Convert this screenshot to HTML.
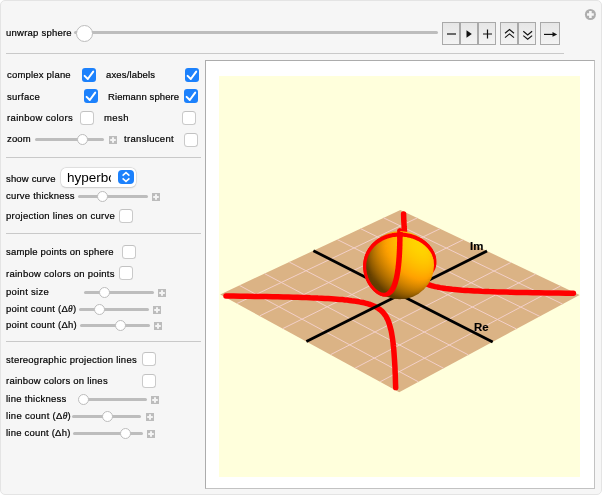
<!DOCTYPE html>
<html><head><meta charset="utf-8"><style>
html,body{margin:0;padding:0;width:602px;height:496px;overflow:hidden;background:#fff;}
body{position:relative;font-family:"Liberation Sans",sans-serif;}
#panel{position:absolute;left:0;top:0;width:600px;height:493px;background:#f6f6f6;border:1px solid #e4e4e4;border-radius:5px;}
.t{position:absolute;font-size:9.5px;will-change:transform;line-height:normal;white-space:nowrap;color:#000;-webkit-text-stroke:0.2px #000;}
.cb{position:absolute;width:12px;height:12px;background:#fff;border:1px solid #cacaca;border-top-color:#c2c2c2;border-radius:3.5px;}
.cbc{position:absolute;width:14px;height:14px;background:#1c81fc;border-radius:3px;}
.cbc svg{position:absolute;left:0;top:0;}
.tr{position:absolute;height:3px;background:#bdbdbd;border-radius:1.5px;}
.kn{position:absolute;width:9px;height:9px;background:#fff;border:1px solid #bcbcbc;border-radius:50%;}
.pl{position:absolute;width:8px;height:8px;background:#bcbcbc;}
.pl svg{position:absolute;left:0;top:0;}
.sep{position:absolute;height:1px;background:#c9c9c9;}
.btn{position:absolute;top:22px;height:21px;background:linear-gradient(#e6e6e6,#f3f3f3);border:1px solid #a9a9a9;}
#frame{position:absolute;left:205px;top:60px;width:388px;height:427px;background:#fff;border:1px solid;border-color:#acacac #c2c2c2 #c2c2c2 #acacac;}
</style></head><body>
<div id="panel"></div>
<div class="sep" style="left:6px;top:53px;width:558px"></div>
<div class="sep" style="left:6px;top:157px;width:195px"></div>
<div class="sep" style="left:6px;top:233px;width:195px"></div>
<div class="sep" style="left:6px;top:341px;width:195px"></div>
<div class="tr" style="left:74px;top:31px;width:364px"></div>
<div class="kn" style="left:76px;top:25px;width:15px;height:15px;"></div>
<div class="btn" style="left:442px;width:16px"></div>
<div class="btn" style="left:460px;width:16px"></div>
<div class="btn" style="left:478px;width:16px"></div>
<div class="btn" style="left:500px;width:16px"></div>
<div class="btn" style="left:518px;width:16px"></div>
<div class="btn" style="left:540px;width:18px"></div>
<svg style="position:absolute;left:0;top:0" width="602" height="496">
<path d="M447,34H456" stroke="#111" stroke-width="1.2"/>
<path d="M466.5,30.3L471.8,34L466.5,37.7Z" fill="#111"/>
<path d="M483,34H492M487.5,29.5V38.5" stroke="#111" stroke-width="1.2"/>
<path d="M505,33.3L509.5,29.6L514,33.3M505,37.6L509.5,33.9L514,37.6" stroke="#111" stroke-width="1.15" fill="none"/>
<path d="M523.3,31.3L527.7,35L532.1,31.3M523.3,35.6L527.7,39.3L532.1,35.6" stroke="#111" stroke-width="1.15" fill="none"/>
<path d="M544,34.4H554" stroke="#111" stroke-width="1.15"/><path d="M552.5,32L557.2,34.4L552.5,36.8Z" fill="#111"/>
<circle cx="590.4" cy="14.5" r="5.5" fill="#adadad"/>
<path d="M587,14.5H593.8M590.4,11.1V17.9" stroke="#f6f6f6" stroke-width="2.6"/>
</svg>
<div class="t" style="left:6.1px;top:27.40px;letter-spacing:0.233px">unwrap sphere</div>
<div class="t" style="left:6.9px;top:69.40px;letter-spacing:0.2px">complex plane</div>
<div class="t" style="left:105.9px;top:69.40px;letter-spacing:0.15px">axes/labels</div>
<div class="t" style="left:6.9px;top:91.40px;letter-spacing:0.267px">surface</div>
<div class="t" style="left:107.5px;top:91.40px;letter-spacing:0.108px">Riemann sphere</div>
<div class="t" style="left:6.9px;top:112.40px;letter-spacing:0.346px">rainbow colors</div>
<div class="t" style="left:103.5px;top:112.40px;letter-spacing:0.4px">mesh</div>
<div class="t" style="left:6.9px;top:133.40px;letter-spacing:0.133px">zoom</div>
<div class="t" style="left:124.0px;top:133.40px;letter-spacing:0.32px">translucent</div>
<div class="t" style="left:6.0px;top:173.40px;letter-spacing:0.167px">show curve</div>
<div class="t" style="left:6.0px;top:190.40px;letter-spacing:0.214px">curve thickness</div>
<div class="t" style="left:5.5px;top:210.40px;letter-spacing:0.267px">projection lines on curve</div>
<div class="t" style="left:6.0px;top:246.40px;letter-spacing:0.182px">sample points on sphere</div>
<div class="t" style="left:5.5px;top:268.40px;letter-spacing:0.261px">rainbow colors on points</div>
<div class="t" style="left:5.9px;top:286.40px;letter-spacing:0.3px">point size</div>
<div class="t" style="left:5.9px;top:303.20px;letter-spacing:0.247px">point count (&Delta;<i style="font-family:'Liberation Serif'">&theta;</i>)</div>
<div class="t" style="left:5.9px;top:319.20px;letter-spacing:0.24px">point count (&Delta;h)</div>
<div class="t" style="left:6.0px;top:353.90px;letter-spacing:0.245px">stereographic projection lines</div>
<div class="t" style="left:5.5px;top:375.20px;letter-spacing:0.227px">rainbow colors on lines</div>
<div class="t" style="left:5.5px;top:393.00px;letter-spacing:0.246px">line thickness</div>
<div class="t" style="left:5.5px;top:410.40px;letter-spacing:0.293px">line count (&Delta;<i style="font-family:'Liberation Serif'">&theta;</i>)</div>
<div class="t" style="left:5.5px;top:427.20px;letter-spacing:0.221px">line count (&Delta;h)</div>
<div class="cbc" style="left:82px;top:68px"><svg width="14" height="14" viewBox="0 0 14 14"><path d="M2.6,7.9 L5.8,11 L11.2,3.6" stroke="#fff" stroke-width="2" fill="none" stroke-linecap="round" stroke-linejoin="round"/></svg></div>
<div class="cbc" style="left:185px;top:68px"><svg width="14" height="14" viewBox="0 0 14 14"><path d="M2.6,7.9 L5.8,11 L11.2,3.6" stroke="#fff" stroke-width="2" fill="none" stroke-linecap="round" stroke-linejoin="round"/></svg></div>
<div class="cbc" style="left:84px;top:89px"><svg width="14" height="14" viewBox="0 0 14 14"><path d="M2.6,7.9 L5.8,11 L11.2,3.6" stroke="#fff" stroke-width="2" fill="none" stroke-linecap="round" stroke-linejoin="round"/></svg></div>
<div class="cbc" style="left:184px;top:89px"><svg width="14" height="14" viewBox="0 0 14 14"><path d="M2.6,7.9 L5.8,11 L11.2,3.6" stroke="#fff" stroke-width="2" fill="none" stroke-linecap="round" stroke-linejoin="round"/></svg></div>
<div class="cb" style="left:79.7px;top:111px"></div>
<div class="cb" style="left:182px;top:111px"></div>
<div class="cb" style="left:184px;top:133px"></div>
<div class="cb" style="left:119px;top:209px"></div>
<div class="cb" style="left:122px;top:245px"></div>
<div class="cb" style="left:119px;top:266.2px"></div>
<div class="cb" style="left:142px;top:352.3px"></div>
<div class="cb" style="left:142px;top:374px"></div>
<div class="tr" style="left:35.4px;top:137.80px;width:69.00px"></div><div class="kn" style="left:76.90px;top:133.80px"></div><div class="pl" style="left:109px;top:136.20px"><svg width="8" height="8"><path d="M1.2,4H6.8M4,1.2V6.8" stroke="#f4f4f4" stroke-width="2"/></svg></div>
<div class="tr" style="left:78px;top:195.00px;width:69.60px"></div><div class="kn" style="left:96.80px;top:191.00px"></div><div class="pl" style="left:152px;top:193.40px"><svg width="8" height="8"><path d="M1.2,4H6.8M4,1.2V6.8" stroke="#f4f4f4" stroke-width="2"/></svg></div>
<div class="tr" style="left:84.2px;top:290.70px;width:69.80px"></div><div class="kn" style="left:99.00px;top:286.70px"></div><div class="pl" style="left:158px;top:289.10px"><svg width="8" height="8"><path d="M1.2,4H6.8M4,1.2V6.8" stroke="#f4f4f4" stroke-width="2"/></svg></div>
<div class="tr" style="left:79px;top:307.80px;width:69.90px"></div><div class="kn" style="left:94.00px;top:303.80px"></div><div class="pl" style="left:153px;top:306.20px"><svg width="8" height="8"><path d="M1.2,4H6.8M4,1.2V6.8" stroke="#f4f4f4" stroke-width="2"/></svg></div>
<div class="tr" style="left:80px;top:323.80px;width:69.70px"></div><div class="kn" style="left:115.10px;top:319.80px"></div><div class="pl" style="left:154px;top:322.20px"><svg width="8" height="8"><path d="M1.2,4H6.8M4,1.2V6.8" stroke="#f4f4f4" stroke-width="2"/></svg></div>
<div class="tr" style="left:78.5px;top:397.90px;width:68.40px"></div><div class="kn" style="left:78.10px;top:393.90px"></div><div class="pl" style="left:151px;top:396.30px"><svg width="8" height="8"><path d="M1.2,4H6.8M4,1.2V6.8" stroke="#f4f4f4" stroke-width="2"/></svg></div>
<div class="tr" style="left:72.4px;top:414.90px;width:68.80px"></div><div class="kn" style="left:101.80px;top:410.90px"></div><div class="pl" style="left:146px;top:413.30px"><svg width="8" height="8"><path d="M1.2,4H6.8M4,1.2V6.8" stroke="#f4f4f4" stroke-width="2"/></svg></div>
<div class="tr" style="left:73.4px;top:431.70px;width:69.20px"></div><div class="kn" style="left:119.60px;top:427.70px"></div><div class="pl" style="left:147px;top:430.10px"><svg width="8" height="8"><path d="M1.2,4H6.8M4,1.2V6.8" stroke="#f4f4f4" stroke-width="2"/></svg></div>
<div style="position:absolute;left:61px;top:168px;width:75px;height:19px;background:#fff;border-radius:5px;box-shadow:0 0 0 0.5px #cfcfcf,0 0.5px 1.5px rgba(0,0,0,0.18);overflow:hidden">
<div style="position:absolute;left:5.5px;top:-0.5px;font-size:13.5px;line-height:19px;color:#000;width:44px;overflow:hidden;white-space:nowrap;will-change:transform">hyperbola</div>
<div style="position:absolute;left:57px;top:2px;width:16px;height:14px;background:#1c81fc;border-radius:4px">
<svg width="16" height="14" style="position:absolute;left:0;top:0"><path d="M4.6,5.6L8,2.6L11.4,5.6M4.6,8.4L8,11.4L11.4,8.4" stroke="#fff" stroke-width="1.5" fill="none"/></svg></div>
</div>
<div id="frame"></div>
<svg style="position:absolute;left:0;top:0" width="602" height="496">
<defs>
<radialGradient id="sph" cx="0.68" cy="0.25" r="0.95" fx="0.68" fy="0.25">
<stop offset="0" stop-color="#ffcf00"/>
<stop offset="0.35" stop-color="#f7b000"/>
<stop offset="0.7" stop-color="#c07a00"/>
<stop offset="1" stop-color="#4a2c00"/>
</radialGradient>
<clipPath id="clipy"><rect x="219" y="76" width="361" height="401"/></clipPath>
</defs>
<rect x="219" y="76" width="361" height="401" fill="#ffffdc"/>
<g clip-path="url(#clipy)">
<polygon points="220.2,294.4 400.4,209.9 579.6,295.0 399.2,392.3" fill="#dbb385"/>
<path d="M237.0,303.5L417.3,217.9M239.4,285.4L418.5,381.9M259.7,315.9L440.1,228.7M264.5,273.6L443.7,368.3M282.8,328.6L463.3,239.7M289.2,262.0L468.4,354.9M330.5,354.7L511.0,262.4M337.2,239.5L516.5,329.0M355.1,368.1L535.6,274.1M360.5,228.6L539.8,316.4M380.1,381.8L560.6,285.9M383.5,217.8L562.7,304.1" stroke="#f2cfc8" stroke-width="1.0" fill="none"/>
<polyline points="226.0,296.0 233.5,296.1 240.7,296.2 247.6,296.3 254.2,296.4 260.5,296.5 266.6,296.6 272.4,296.7 277.9,296.8 283.2,297.0 288.2,297.1 293.1,297.2 297.7,297.3 302.1,297.5 306.3,297.6 310.4,297.8 314.3,297.9 318.0,298.1 321.5,298.2 324.9,298.4 328.1,298.6 331.2,298.8 334.2,299.0 337.0,299.2 339.8,299.4 342.4,299.6 344.8,299.9 347.2,300.1 349.5,300.4 351.7,300.7 353.7,300.9 355.7,301.2 357.6,301.5 359.4,301.9 361.2,302.2 362.9,302.5 364.4,302.9 366.0,303.3 367.4,303.7 368.8,304.1 370.2,304.5 371.4,305.0 372.6,305.5 373.8,306.0 374.9,306.5 376.0,307.0 377.0,307.6 378.0,308.2 378.9,308.8 379.8,309.5 380.7,310.2 381.5,310.9 382.3,311.6 383.0,312.4 383.7,313.2 384.4,314.1 385.0,315.0 385.7,315.9 386.3,316.9 386.8,318.0 387.4,319.0 387.9,320.2 388.4,321.3 388.8,322.6 389.3,323.9 389.7,325.2 390.1,326.7 390.5,328.2 390.9,329.7 391.3,331.4 391.6,333.1 391.9,334.9 392.2,336.8 392.5,338.7 392.8,340.8 393.1,343.0 393.3,345.3 393.6,347.6 393.8,350.2 394.0,352.8 394.2,355.6 394.4,358.5 394.6,361.5 394.8,364.7 395.0,368.1 395.1,371.6 395.3,375.3 395.4,379.2 395.5,383.3 395.7,387.6" stroke="#ff0000" stroke-width="5.5" fill="none" stroke-linecap="round" stroke-linejoin="round"/>
<polyline points="403.6,214.1 403.7,217.4 403.8,220.5 404.0,223.5 404.1,226.5 404.3,229.3 404.5,232.0 404.7,234.6 404.8,237.0 405.1,239.4 405.3,241.7 405.5,243.9 405.7,246.0 406.0,248.1 406.2,250.0 406.5,251.9 406.8,253.7 407.1,255.4 407.4,257.1 407.7,258.6 408.1,260.2 408.4,261.6 408.8,263.0 409.2,264.4 409.6,265.6 410.0,266.9 410.5,268.1 411.0,269.2 411.5,270.3 412.0,271.3 412.5,272.3 413.1,273.3 413.7,274.2 414.3,275.1 415.0,275.9 415.7,276.7 416.4,277.5 417.1,278.2 417.9,278.9 418.7,279.6 419.6,280.2 420.5,280.9 421.4,281.5 422.4,282.0 423.4,282.6 424.5,283.1 425.6,283.6 426.8,284.1 428.0,284.5 429.3,285.0 430.6,285.4 432.0,285.8 433.4,286.2 435.0,286.6 436.6,286.9 438.2,287.2 440.0,287.6 441.8,287.9 443.7,288.2 445.7,288.5 447.8,288.7 449.9,289.0 452.2,289.3 454.6,289.5 457.1,289.7 459.7,289.9 462.4,290.2 465.2,290.4 468.2,290.6 471.3,290.7 474.5,290.9 477.9,291.1 481.5,291.3 485.2,291.4 489.1,291.6 493.1,291.7 497.3,291.9 501.8,292.0 506.4,292.1 511.2,292.3 516.3,292.4 521.5,292.5 527.1,292.6 532.8,292.7 538.9,292.8 545.2,292.9 551.8,293.0 558.6,293.1 565.8,293.2 573.4,293.3" stroke="#ff0000" stroke-width="5.5" fill="none" stroke-linecap="round" stroke-linejoin="round"/>
<path d="M313.4,250.7L492.7,341.9M306.4,341.5L487.0,251.0" stroke="#000" stroke-width="2.8" fill="none"/>
<polyline points="399.8,235.3 399.8,235.3 399.8,235.3 399.8,235.3 399.7,235.3 399.7,235.3 399.7,235.3 399.6,235.3 399.6,235.3 399.6,235.3 399.5,235.3 399.4,235.3 399.4,235.3 399.3,235.3 399.1,235.3 399.0,235.3 398.8,235.3 398.6,235.3 398.4,235.3 398.1,235.3 397.8,235.3 397.4,235.3 397.0,235.4 396.4,235.4 395.8,235.5 395.0,235.6 394.1,235.7 393.1,235.8 391.8,236.1 390.4,236.4 390.1,236.5 389.9,236.5 389.7,236.6 389.4,236.7 389.2,236.8 388.9,236.8 388.6,236.9 388.4,237.0 388.1,237.1 387.8,237.2 387.5,237.3 387.2,237.4 386.9,237.5 386.6,237.6 386.3,237.7 386.0,237.8 385.7,238.0 385.4,238.1 385.0,238.2 384.7,238.4 384.3,238.5 384.0,238.7 383.6,238.9 383.3,239.0 382.9,239.2 382.5,239.4 382.2,239.6 381.8,239.8 381.4,240.0 381.0,240.3 380.6,240.5 380.2,240.8 379.8,241.0 379.4,241.3 379.0,241.6 378.6,241.9 378.1,242.2 377.7,242.5 377.3,242.8 376.9,243.2 376.4,243.5 376.0,243.9 375.6,244.3 375.2,244.7 374.7,245.1 374.3,245.5 373.9,246.0 373.5,246.4 373.0,246.9 372.6,247.4 372.2,247.9 371.8,248.4 371.4,249.0 371.0,249.5 370.6,250.1 370.3,250.7 369.9,251.3 369.6,251.9 369.2,252.5 368.9,253.2 368.6,253.9 368.3,254.5 368.0,255.2 367.7,255.9 367.5,256.7 367.2,257.4 367.0,258.1 366.8,258.9 366.6,259.7 366.5,260.4 366.3,261.2 366.2,262.0 366.1,262.8 366.0,263.6 366.0,264.5 365.9,265.3 365.9,266.1 365.9,266.9 365.9,267.8 366.0,268.6 366.1,269.4 366.2,270.2 366.3,271.1 366.4,271.9 366.6,272.7 366.8,273.5 367.0,274.3 367.2,275.1 367.5,275.9 367.7,276.7 368.0,277.5 368.3,278.2 368.6,279.0 369.0,279.7 369.3,280.4 369.7,281.1 370.1,281.8 370.4,282.5 370.8,283.2 371.3,283.8 371.7,284.4 372.1,285.0 372.6,285.6 373.0,286.2 373.5,286.8 373.9,287.3 374.4,287.8 374.9,288.3 375.3,288.8 375.8,289.3 376.3,289.7 376.8,290.1 377.3,290.5 377.8,290.9 378.2,291.3 378.7,291.6 379.2,291.9 379.7,292.2 380.2,292.5 380.7,292.7 381.1,292.9 381.6,293.1 382.1,293.3 382.6,293.5 383.0,293.6 383.5,293.7 383.9,293.8 384.4,293.8 384.8,293.9 385.3,293.9 385.7,293.9 386.1,293.8 386.6,293.8 387.0,293.7 387.4,293.6 387.8,293.4 388.2,293.2 388.6,293.0 389.0,292.8 389.3,292.6 389.7,292.3 390.1,292.0 390.4,291.7 390.8,291.3 391.1,291.0 391.4,290.6 391.8,290.1 392.1,289.7 392.4,289.2 392.7,288.7 393.0,288.2 393.3,287.6 393.5,287.1 393.8,286.5 394.1,285.9 394.3,285.2 394.6,284.6 394.8,283.9 395.0,283.2 395.3,282.5 395.5,281.8 395.7,281.1 395.9,280.4 396.1,279.6 396.3,278.9 396.4,278.1 396.6,277.3 396.8,276.5 396.9,275.7 397.1,274.9 397.2,274.1 397.4,273.3 397.5,272.5 397.6,271.7 397.8,270.9 397.9,270.2 398.0,269.4 398.1,268.6 398.2,267.8 398.3,267.0 398.4,266.2 398.5,265.5 398.5,264.7 398.6,264.0 398.7,263.3 398.7,262.5 398.8,261.8 398.9,261.1 398.9,260.4 399.0,259.8 399.0,259.1 399.1,258.4 399.1,257.8 399.2,257.2 399.2,256.6 399.3,256.0 399.3,255.4 399.3,254.8 399.4,254.3 399.4,253.7 399.4,253.2 399.4,252.7 399.5,252.2 399.5,251.7 399.5,251.2 399.5,250.7 399.6,250.3 399.6,249.8 399.6,249.4 399.6,249.0 399.6,248.6 399.6,248.2 399.6,247.8 399.7,247.4 399.7,247.1 399.7,246.7 399.7,246.4 399.7,246.0 399.7,245.7 399.7,245.4 399.7,245.1 399.7,244.8 399.7,244.5 399.7,244.3 399.8,244.0 399.8,243.7 399.8,243.5 399.8,243.2 399.8,243.0 399.8,242.8 399.8,242.6 399.8,242.4 399.8,242.1 399.8,241.9 399.8,241.7 399.8,241.6 399.8,241.4 399.8,241.2 399.8,241.0 399.8,240.0 399.8,239.1 399.8,238.5 399.8,237.9 399.9,237.4 399.9,237.1 399.9,236.8 399.9,236.5 399.9,236.3 399.9,236.1 399.9,236.0 399.9,235.9 399.9,235.8 399.9,235.7 399.9,235.6 399.9,235.6 399.9,235.5 399.9,235.5 399.9,235.4 399.9,235.4 399.9,235.4 399.9,235.4 399.9,235.3 399.9,235.3 399.9,235.3 399.9,235.3 399.9,235.3 399.9,235.3 399.9,235.3" stroke="#ff0000" stroke-width="5.5" fill="none" stroke-linecap="round" stroke-linejoin="round"/>
<polyline points="399.9,235.2 399.9,235.2 399.9,235.2 399.9,235.2 399.9,235.2 399.9,235.2 399.9,235.2 399.9,235.2 399.9,235.1 399.9,235.1 399.9,235.1 399.9,235.1 399.9,235.0 399.9,235.0 399.9,234.9 399.9,234.8 399.9,234.8 399.9,234.7 399.9,234.6 399.9,234.5 399.9,234.3 399.9,234.2 399.9,234.0 399.9,233.8 399.9,233.5 399.9,233.2 399.9,232.9 399.9,232.6 399.9,232.2 399.9,231.9 399.9,231.8 399.9,231.8 399.9,231.7 399.9,231.7 399.9,231.6 399.9,231.6 399.9,231.5 399.9,231.5 400.0,231.4 400.0,231.4 400.0,231.3 400.0,231.3 400.0,231.3 400.0,231.2 400.0,231.2 400.0,231.2 400.0,231.1 400.0,231.1 400.0,231.1 400.0,231.1 400.0,231.1 400.0,231.0 400.0,231.0 400.1,231.0 400.1,231.0 400.1,231.0 400.1,231.1 400.1,231.1 400.1,231.1 400.1,231.1 400.2,231.2 400.2,231.2 400.2,231.3 400.2,231.4 400.2,231.4 400.3,231.5 400.3,231.6 400.3,231.7 400.3,231.8 400.4,232.0 400.4,232.1 400.4,232.2 400.5,232.4 400.5,232.6 400.5,232.8 400.6,233.0 400.6,233.2 400.7,233.4 400.7,233.7 400.8,233.9 400.8,234.2 400.9,234.5 401.0,234.8 401.0,235.2 401.1,235.5 401.2,235.9 401.3,236.3 401.3,236.7 401.4,237.1 401.5,237.6 401.6,238.0 401.7,238.5 401.8,239.0 401.9,239.5 402.0,240.0 402.2,240.6 402.3,241.2 402.4,241.7 402.6,242.3 402.7,243.0 402.9,243.6 403.0,244.2 403.2,244.9 403.4,245.6 403.6,246.3 403.7,247.0 403.9,247.7 404.1,248.4 404.4,249.1 404.6,249.9 404.8,250.6 405.0,251.4 405.3,252.1 405.5,252.9 405.8,253.6 406.0,254.4 406.3,255.2 406.6,255.9 406.9,256.7 407.2,257.4 407.5,258.2 407.8,258.9 408.1,259.6 408.4,260.4 408.8,261.1 409.1,261.8 409.4,262.5 409.8,263.2 410.2,263.8 410.5,264.5 410.9,265.1 411.3,265.7 411.7,266.3 412.1,266.9 412.5,267.5 412.9,268.1 413.3,268.6 413.8,269.1 414.2,269.6 414.6,270.1 415.1,270.5 415.5,270.9 416.0,271.3 416.4,271.7 416.9,272.1 417.4,272.4 417.8,272.7 418.3,273.0 418.8,273.3 419.3,273.5 419.7,273.7 420.2,273.9 420.7,274.1 421.2,274.2 421.7,274.3 422.2,274.4 422.7,274.5 423.2,274.5 423.6,274.5 424.1,274.5 424.6,274.5 425.1,274.4 425.6,274.3 426.0,274.2 426.5,274.1 426.9,273.9 427.4,273.7 427.8,273.5 428.2,273.2 428.7,273.0 429.1,272.7 429.5,272.4 429.8,272.0 430.2,271.7 430.6,271.3 430.9,270.9 431.2,270.5 431.5,270.0 431.8,269.6 432.1,269.1 432.3,268.6 432.6,268.1 432.8,267.5 433.0,267.0 433.2,266.4 433.3,265.9 433.4,265.3 433.5,264.7 433.6,264.1 433.7,263.5 433.7,262.9 433.7,262.3 433.7,261.6 433.7,261.0 433.6,260.4 433.6,259.7 433.5,259.1 433.3,258.5 433.2,257.8 433.1,257.2 432.9,256.6 432.7,255.9 432.5,255.3 432.2,254.7 432.0,254.1 431.7,253.5 431.4,252.9 431.1,252.3 430.8,251.8 430.5,251.2 430.1,250.7 429.8,250.1 429.4,249.6 429.1,249.1 428.7,248.6 428.3,248.1 427.9,247.6 427.5,247.1 427.1,246.7 426.7,246.2 426.3,245.8 425.8,245.4 425.4,245.0 425.0,244.6 424.6,244.2 424.1,243.9 423.7,243.5 423.3,243.2 422.9,242.8 422.4,242.5 422.0,242.2 421.6,241.9 421.2,241.6 420.8,241.4 420.3,241.1 419.9,240.8 419.5,240.6 419.1,240.4 418.7,240.1 418.3,239.9 418.0,239.7 417.6,239.5 417.2,239.3 416.8,239.1 416.5,239.0 416.1,238.8 415.7,238.6 415.4,238.5 415.0,238.3 414.7,238.2 414.4,238.1 414.0,237.9 413.7,237.8 413.4,237.7 413.1,237.6 412.8,237.5 412.5,237.4 412.2,237.3 411.9,237.2 411.6,237.1 411.4,237.0 411.1,236.9 410.8,236.8 410.6,236.8 410.3,236.7 410.1,236.6 409.8,236.6 409.6,236.5 409.4,236.4 407.9,236.1 406.7,235.9 405.6,235.7 404.7,235.6 403.9,235.5 403.3,235.4 402.8,235.4 402.3,235.3 401.9,235.3 401.6,235.3 401.3,235.3 401.1,235.3 400.9,235.3 400.7,235.3 400.6,235.3 400.5,235.3 400.4,235.3 400.3,235.3 400.2,235.3 400.2,235.3 400.1,235.3 400.1,235.3 400.1,235.3 400.0,235.3 400.0,235.3 400.0,235.3 400.0,235.3 399.9,235.3 399.9,235.3" stroke="#ff0000" stroke-width="5.5" fill="none" stroke-linecap="round" stroke-linejoin="round"/>
<clipPath id="sc"><circle cx="399.87" cy="265.19" r="34.15"/></clipPath><g clip-path="url(#sc)">
<defs><linearGradient id="g0" gradientUnits="userSpaceOnUse" x1="393" y1="0" x2="407" y2="0"><stop offset="0.000" stop-color="#f69a00"/><stop offset="0.286" stop-color="#ffab00"/><stop offset="0.571" stop-color="#ffb300"/><stop offset="0.857" stop-color="#ffb400"/><stop offset="1.000" stop-color="#ffb300"/></linearGradient><linearGradient id="g1" gradientUnits="userSpaceOnUse" x1="388" y1="0" x2="411" y2="0"><stop offset="0.000" stop-color="#e48f00"/><stop offset="0.174" stop-color="#ffa200"/><stop offset="0.348" stop-color="#ffaf00"/><stop offset="0.522" stop-color="#ffb700"/><stop offset="0.696" stop-color="#ffbd00"/><stop offset="0.870" stop-color="#ffbe00"/><stop offset="1.000" stop-color="#ffb900"/></linearGradient><linearGradient id="g2" gradientUnits="userSpaceOnUse" x1="386" y1="0" x2="414" y2="0"><stop offset="0.000" stop-color="#dc8a00"/><stop offset="0.143" stop-color="#ffa000"/><stop offset="0.286" stop-color="#ffad00"/><stop offset="0.429" stop-color="#ffb700"/><stop offset="0.571" stop-color="#ffbe00"/><stop offset="0.714" stop-color="#ffc300"/><stop offset="0.857" stop-color="#ffc400"/><stop offset="1.000" stop-color="#ffbc00"/></linearGradient><linearGradient id="g3" gradientUnits="userSpaceOnUse" x1="383" y1="0" x2="416" y2="0"><stop offset="0.000" stop-color="#d08300"/><stop offset="0.121" stop-color="#f29800"/><stop offset="0.242" stop-color="#ffa700"/><stop offset="0.364" stop-color="#ffb200"/><stop offset="0.485" stop-color="#ffbb00"/><stop offset="0.606" stop-color="#ffc200"/><stop offset="0.727" stop-color="#ffc600"/><stop offset="0.848" stop-color="#ffc800"/><stop offset="0.970" stop-color="#ffbd00"/><stop offset="1.000" stop-color="#ffbe00"/></linearGradient><linearGradient id="g4" gradientUnits="userSpaceOnUse" x1="381" y1="0" x2="418" y2="0"><stop offset="0.000" stop-color="#c87d00"/><stop offset="0.108" stop-color="#eb9300"/><stop offset="0.216" stop-color="#ffa300"/><stop offset="0.324" stop-color="#ffaf00"/><stop offset="0.432" stop-color="#ffb800"/><stop offset="0.541" stop-color="#ffc000"/><stop offset="0.649" stop-color="#ffc600"/><stop offset="0.757" stop-color="#ffca00"/><stop offset="0.865" stop-color="#ffcb00"/><stop offset="0.973" stop-color="#ffbf00"/><stop offset="1.000" stop-color="#ffbf00"/></linearGradient><linearGradient id="g5" gradientUnits="userSpaceOnUse" x1="380" y1="0" x2="420" y2="0"><stop offset="0.000" stop-color="#c27a00"/><stop offset="0.100" stop-color="#e99200"/><stop offset="0.200" stop-color="#ffa200"/><stop offset="0.300" stop-color="#ffae00"/><stop offset="0.400" stop-color="#ffb700"/><stop offset="0.500" stop-color="#ffbf00"/><stop offset="0.600" stop-color="#ffc600"/><stop offset="0.700" stop-color="#ffca00"/><stop offset="0.800" stop-color="#ffcd00"/><stop offset="0.900" stop-color="#ffcc00"/><stop offset="1.000" stop-color="#ffc000"/></linearGradient><linearGradient id="g6" gradientUnits="userSpaceOnUse" x1="378" y1="0" x2="421" y2="0"><stop offset="0.000" stop-color="#ba7400"/><stop offset="0.093" stop-color="#df8c00"/><stop offset="0.186" stop-color="#fa9d00"/><stop offset="0.279" stop-color="#ffa900"/><stop offset="0.372" stop-color="#ffb400"/><stop offset="0.465" stop-color="#ffbc00"/><stop offset="0.558" stop-color="#ffc400"/><stop offset="0.651" stop-color="#ffc900"/><stop offset="0.744" stop-color="#ffcd00"/><stop offset="0.837" stop-color="#ffcf00"/><stop offset="0.930" stop-color="#ffcc00"/><stop offset="1.000" stop-color="#ffc100"/></linearGradient><linearGradient id="g7" gradientUnits="userSpaceOnUse" x1="377" y1="0" x2="423" y2="0"><stop offset="0.000" stop-color="#b47100"/><stop offset="0.087" stop-color="#dc8a00"/><stop offset="0.174" stop-color="#f79b00"/><stop offset="0.261" stop-color="#ffa800"/><stop offset="0.348" stop-color="#ffb200"/><stop offset="0.435" stop-color="#ffbb00"/><stop offset="0.522" stop-color="#ffc200"/><stop offset="0.609" stop-color="#ffc900"/><stop offset="0.696" stop-color="#ffcd00"/><stop offset="0.783" stop-color="#ffd000"/><stop offset="0.870" stop-color="#ffd000"/><stop offset="0.957" stop-color="#ffc600"/><stop offset="1.000" stop-color="#ffc100"/></linearGradient><linearGradient id="g8" gradientUnits="userSpaceOnUse" x1="376" y1="0" x2="424" y2="0"><stop offset="0.000" stop-color="#ae6d00"/><stop offset="0.083" stop-color="#d88800"/><stop offset="0.167" stop-color="#f39800"/><stop offset="0.250" stop-color="#ffa500"/><stop offset="0.333" stop-color="#ffb000"/><stop offset="0.417" stop-color="#ffb900"/><stop offset="0.500" stop-color="#ffc100"/><stop offset="0.583" stop-color="#ffc800"/><stop offset="0.667" stop-color="#ffcd00"/><stop offset="0.750" stop-color="#ffd000"/><stop offset="0.833" stop-color="#ffd200"/><stop offset="0.917" stop-color="#ffcf00"/><stop offset="1.000" stop-color="#ffc200"/></linearGradient><linearGradient id="g9" gradientUnits="userSpaceOnUse" x1="375" y1="0" x2="425" y2="0"><stop offset="0.000" stop-color="#a96a00"/><stop offset="0.080" stop-color="#d48500"/><stop offset="0.160" stop-color="#ef9600"/><stop offset="0.240" stop-color="#ffa300"/><stop offset="0.320" stop-color="#ffae00"/><stop offset="0.400" stop-color="#ffb700"/><stop offset="0.480" stop-color="#ffbf00"/><stop offset="0.560" stop-color="#ffc600"/><stop offset="0.640" stop-color="#ffcc00"/><stop offset="0.720" stop-color="#ffd000"/><stop offset="0.800" stop-color="#ffd300"/><stop offset="0.880" stop-color="#ffd200"/><stop offset="0.960" stop-color="#ffc900"/><stop offset="1.000" stop-color="#ffc200"/></linearGradient><linearGradient id="g10" gradientUnits="userSpaceOnUse" x1="374" y1="0" x2="426" y2="0"><stop offset="0.000" stop-color="#a36600"/><stop offset="0.077" stop-color="#cf8200"/><stop offset="0.154" stop-color="#ea9300"/><stop offset="0.231" stop-color="#ffa000"/><stop offset="0.308" stop-color="#ffab00"/><stop offset="0.385" stop-color="#ffb500"/><stop offset="0.462" stop-color="#ffbd00"/><stop offset="0.538" stop-color="#ffc500"/><stop offset="0.615" stop-color="#ffcb00"/><stop offset="0.692" stop-color="#ffcf00"/><stop offset="0.769" stop-color="#ffd300"/><stop offset="0.846" stop-color="#ffd400"/><stop offset="0.923" stop-color="#ffd000"/><stop offset="1.000" stop-color="#ffc200"/></linearGradient><linearGradient id="g11" gradientUnits="userSpaceOnUse" x1="373" y1="0" x2="427" y2="0"><stop offset="0.000" stop-color="#9e6300"/><stop offset="0.074" stop-color="#c97e00"/><stop offset="0.148" stop-color="#e59000"/><stop offset="0.222" stop-color="#fb9d00"/><stop offset="0.296" stop-color="#ffa900"/><stop offset="0.370" stop-color="#ffb300"/><stop offset="0.444" stop-color="#ffbb00"/><stop offset="0.519" stop-color="#ffc300"/><stop offset="0.593" stop-color="#ffc900"/><stop offset="0.667" stop-color="#ffce00"/><stop offset="0.741" stop-color="#ffd200"/><stop offset="0.815" stop-color="#ffd400"/><stop offset="0.889" stop-color="#ffd300"/><stop offset="0.963" stop-color="#ffc900"/><stop offset="1.000" stop-color="#ffc100"/></linearGradient><linearGradient id="g12" gradientUnits="userSpaceOnUse" x1="372" y1="0" x2="428" y2="0"><stop offset="0.000" stop-color="#985f00"/><stop offset="0.071" stop-color="#c37a00"/><stop offset="0.143" stop-color="#e08c00"/><stop offset="0.214" stop-color="#f69a00"/><stop offset="0.286" stop-color="#ffa600"/><stop offset="0.357" stop-color="#ffb000"/><stop offset="0.429" stop-color="#ffb900"/><stop offset="0.500" stop-color="#ffc100"/><stop offset="0.571" stop-color="#ffc700"/><stop offset="0.643" stop-color="#ffcd00"/><stop offset="0.714" stop-color="#ffd100"/><stop offset="0.786" stop-color="#ffd400"/><stop offset="0.857" stop-color="#ffd400"/><stop offset="0.929" stop-color="#ffd000"/><stop offset="1.000" stop-color="#ffc100"/></linearGradient><linearGradient id="g13" gradientUnits="userSpaceOnUse" x1="371" y1="0" x2="429" y2="0"><stop offset="0.000" stop-color="#935c00"/><stop offset="0.069" stop-color="#bc7600"/><stop offset="0.138" stop-color="#da8900"/><stop offset="0.207" stop-color="#f19700"/><stop offset="0.276" stop-color="#ffa300"/><stop offset="0.345" stop-color="#ffad00"/><stop offset="0.414" stop-color="#ffb700"/><stop offset="0.483" stop-color="#ffbe00"/><stop offset="0.552" stop-color="#ffc500"/><stop offset="0.621" stop-color="#ffcb00"/><stop offset="0.690" stop-color="#ffd000"/><stop offset="0.759" stop-color="#ffd300"/><stop offset="0.828" stop-color="#ffd500"/><stop offset="0.897" stop-color="#ffd300"/><stop offset="0.966" stop-color="#ffc300"/><stop offset="1.000" stop-color="#ffc000"/></linearGradient><linearGradient id="g14" gradientUnits="userSpaceOnUse" x1="370" y1="0" x2="429" y2="0"><stop offset="0.000" stop-color="#8d5900"/><stop offset="0.068" stop-color="#b57200"/><stop offset="0.136" stop-color="#d48500"/><stop offset="0.203" stop-color="#eb9400"/><stop offset="0.271" stop-color="#ffa000"/><stop offset="0.339" stop-color="#ffab00"/><stop offset="0.407" stop-color="#ffb400"/><stop offset="0.475" stop-color="#ffbc00"/><stop offset="0.542" stop-color="#ffc300"/><stop offset="0.610" stop-color="#ffc900"/><stop offset="0.678" stop-color="#ffcf00"/><stop offset="0.746" stop-color="#ffd200"/><stop offset="0.814" stop-color="#ffd400"/><stop offset="0.881" stop-color="#ffd400"/><stop offset="0.949" stop-color="#ffcf00"/><stop offset="1.000" stop-color="#ffc000"/></linearGradient><linearGradient id="g15" gradientUnits="userSpaceOnUse" x1="370" y1="0" x2="430" y2="0"><stop offset="0.000" stop-color="#8a5700"/><stop offset="0.067" stop-color="#b77300"/><stop offset="0.133" stop-color="#d48500"/><stop offset="0.200" stop-color="#eb9400"/><stop offset="0.267" stop-color="#fea000"/><stop offset="0.333" stop-color="#ffaa00"/><stop offset="0.400" stop-color="#ffb300"/><stop offset="0.467" stop-color="#ffbc00"/><stop offset="0.533" stop-color="#ffc300"/><stop offset="0.600" stop-color="#ffc900"/><stop offset="0.667" stop-color="#ffce00"/><stop offset="0.733" stop-color="#ffd200"/><stop offset="0.800" stop-color="#ffd400"/><stop offset="0.867" stop-color="#ffd400"/><stop offset="0.933" stop-color="#ffd000"/><stop offset="1.000" stop-color="#ffbf00"/></linearGradient><linearGradient id="g16" gradientUnits="userSpaceOnUse" x1="369" y1="0" x2="431" y2="0"><stop offset="0.000" stop-color="#855300"/><stop offset="0.065" stop-color="#b06e00"/><stop offset="0.129" stop-color="#ce8100"/><stop offset="0.194" stop-color="#e59000"/><stop offset="0.258" stop-color="#f99c00"/><stop offset="0.323" stop-color="#ffa700"/><stop offset="0.387" stop-color="#ffb000"/><stop offset="0.452" stop-color="#ffb900"/><stop offset="0.516" stop-color="#ffc000"/><stop offset="0.581" stop-color="#ffc700"/><stop offset="0.645" stop-color="#ffcc00"/><stop offset="0.710" stop-color="#ffd100"/><stop offset="0.774" stop-color="#ffd300"/><stop offset="0.839" stop-color="#ffd400"/><stop offset="0.903" stop-color="#ffd200"/><stop offset="0.968" stop-color="#ffc300"/><stop offset="1.000" stop-color="#ffbf00"/></linearGradient><linearGradient id="g17" gradientUnits="userSpaceOnUse" x1="369" y1="0" x2="431" y2="0"><stop offset="0.000" stop-color="#825100"/><stop offset="0.065" stop-color="#b16f00"/><stop offset="0.129" stop-color="#ce8100"/><stop offset="0.194" stop-color="#e58f00"/><stop offset="0.258" stop-color="#f89c00"/><stop offset="0.323" stop-color="#ffa600"/><stop offset="0.387" stop-color="#ffb000"/><stop offset="0.452" stop-color="#ffb800"/><stop offset="0.516" stop-color="#ffc000"/><stop offset="0.581" stop-color="#ffc600"/><stop offset="0.645" stop-color="#ffcc00"/><stop offset="0.710" stop-color="#ffd000"/><stop offset="0.774" stop-color="#ffd300"/><stop offset="0.839" stop-color="#ffd400"/><stop offset="0.903" stop-color="#ffd200"/><stop offset="0.968" stop-color="#ffc800"/><stop offset="1.000" stop-color="#ffbe00"/></linearGradient><linearGradient id="g18" gradientUnits="userSpaceOnUse" x1="368" y1="0" x2="432" y2="0"><stop offset="0.000" stop-color="#7d4e00"/><stop offset="0.062" stop-color="#a86a00"/><stop offset="0.125" stop-color="#c77d00"/><stop offset="0.188" stop-color="#de8c00"/><stop offset="0.250" stop-color="#f29800"/><stop offset="0.312" stop-color="#ffa300"/><stop offset="0.375" stop-color="#ffad00"/><stop offset="0.438" stop-color="#ffb500"/><stop offset="0.500" stop-color="#ffbd00"/><stop offset="0.562" stop-color="#ffc400"/><stop offset="0.625" stop-color="#ffc900"/><stop offset="0.688" stop-color="#ffce00"/><stop offset="0.750" stop-color="#ffd200"/><stop offset="0.812" stop-color="#ffd400"/><stop offset="0.875" stop-color="#ffd300"/><stop offset="0.938" stop-color="#ffce00"/><stop offset="1.000" stop-color="#ffbd00"/></linearGradient><linearGradient id="g19" gradientUnits="userSpaceOnUse" x1="368" y1="0" x2="432" y2="0"><stop offset="0.000" stop-color="#794c00"/><stop offset="0.062" stop-color="#a96a00"/><stop offset="0.125" stop-color="#c67c00"/><stop offset="0.188" stop-color="#dd8b00"/><stop offset="0.250" stop-color="#f19700"/><stop offset="0.312" stop-color="#ffa200"/><stop offset="0.375" stop-color="#ffac00"/><stop offset="0.438" stop-color="#ffb400"/><stop offset="0.500" stop-color="#ffbc00"/><stop offset="0.562" stop-color="#ffc300"/><stop offset="0.625" stop-color="#ffc900"/><stop offset="0.688" stop-color="#ffcd00"/><stop offset="0.750" stop-color="#ffd100"/><stop offset="0.812" stop-color="#ffd300"/><stop offset="0.875" stop-color="#ffd300"/><stop offset="0.938" stop-color="#ffce00"/><stop offset="1.000" stop-color="#ffbc00"/></linearGradient><linearGradient id="g20" gradientUnits="userSpaceOnUse" x1="367" y1="0" x2="433" y2="0"><stop offset="0.000" stop-color="#744900"/><stop offset="0.061" stop-color="#a06400"/><stop offset="0.121" stop-color="#bf7800"/><stop offset="0.182" stop-color="#d78700"/><stop offset="0.242" stop-color="#eb9300"/><stop offset="0.303" stop-color="#fd9f00"/><stop offset="0.364" stop-color="#ffa800"/><stop offset="0.424" stop-color="#ffb100"/><stop offset="0.485" stop-color="#ffb900"/><stop offset="0.545" stop-color="#ffc000"/><stop offset="0.606" stop-color="#ffc600"/><stop offset="0.667" stop-color="#ffcb00"/><stop offset="0.727" stop-color="#ffcf00"/><stop offset="0.788" stop-color="#ffd200"/><stop offset="0.848" stop-color="#ffd200"/><stop offset="0.909" stop-color="#ffd000"/><stop offset="0.970" stop-color="#ffc100"/><stop offset="1.000" stop-color="#ffbb00"/></linearGradient><linearGradient id="g21" gradientUnits="userSpaceOnUse" x1="367" y1="0" x2="433" y2="0"><stop offset="0.000" stop-color="#714700"/><stop offset="0.061" stop-color="#a06400"/><stop offset="0.121" stop-color="#be7700"/><stop offset="0.182" stop-color="#d68600"/><stop offset="0.242" stop-color="#ea9300"/><stop offset="0.303" stop-color="#fb9e00"/><stop offset="0.364" stop-color="#ffa700"/><stop offset="0.424" stop-color="#ffb000"/><stop offset="0.485" stop-color="#ffb800"/><stop offset="0.545" stop-color="#ffbf00"/><stop offset="0.606" stop-color="#ffc500"/><stop offset="0.667" stop-color="#ffca00"/><stop offset="0.727" stop-color="#ffce00"/><stop offset="0.788" stop-color="#ffd100"/><stop offset="0.848" stop-color="#ffd200"/><stop offset="0.909" stop-color="#ffd000"/><stop offset="0.970" stop-color="#ffc400"/><stop offset="1.000" stop-color="#ffba00"/></linearGradient><linearGradient id="g22" gradientUnits="userSpaceOnUse" x1="366" y1="0" x2="433" y2="0"><stop offset="0.000" stop-color="#6d4400"/><stop offset="0.060" stop-color="#965e00"/><stop offset="0.119" stop-color="#b67300"/><stop offset="0.179" stop-color="#cf8200"/><stop offset="0.239" stop-color="#e38f00"/><stop offset="0.299" stop-color="#f59a00"/><stop offset="0.358" stop-color="#ffa400"/><stop offset="0.418" stop-color="#ffad00"/><stop offset="0.478" stop-color="#ffb500"/><stop offset="0.537" stop-color="#ffbc00"/><stop offset="0.597" stop-color="#ffc300"/><stop offset="0.657" stop-color="#ffc800"/><stop offset="0.716" stop-color="#ffcc00"/><stop offset="0.776" stop-color="#ffcf00"/><stop offset="0.836" stop-color="#ffd100"/><stop offset="0.896" stop-color="#ffd000"/><stop offset="0.955" stop-color="#ffca00"/><stop offset="1.000" stop-color="#ffb900"/></linearGradient><linearGradient id="g23" gradientUnits="userSpaceOnUse" x1="366" y1="0" x2="434" y2="0"><stop offset="0.000" stop-color="#694200"/><stop offset="0.059" stop-color="#965e00"/><stop offset="0.118" stop-color="#b57200"/><stop offset="0.176" stop-color="#cd8100"/><stop offset="0.235" stop-color="#e28e00"/><stop offset="0.294" stop-color="#f49900"/><stop offset="0.353" stop-color="#ffa300"/><stop offset="0.412" stop-color="#ffac00"/><stop offset="0.471" stop-color="#ffb400"/><stop offset="0.529" stop-color="#ffbb00"/><stop offset="0.588" stop-color="#ffc100"/><stop offset="0.647" stop-color="#ffc700"/><stop offset="0.706" stop-color="#ffcb00"/><stop offset="0.765" stop-color="#ffce00"/><stop offset="0.824" stop-color="#ffd000"/><stop offset="0.882" stop-color="#ffcf00"/><stop offset="0.941" stop-color="#ffca00"/><stop offset="1.000" stop-color="#ffb800"/></linearGradient><linearGradient id="g24" gradientUnits="userSpaceOnUse" x1="366" y1="0" x2="434" y2="0"><stop offset="0.000" stop-color="#664000"/><stop offset="0.059" stop-color="#955e00"/><stop offset="0.118" stop-color="#b47100"/><stop offset="0.176" stop-color="#cc8000"/><stop offset="0.235" stop-color="#e08c00"/><stop offset="0.294" stop-color="#f29800"/><stop offset="0.353" stop-color="#ffa200"/><stop offset="0.412" stop-color="#ffab00"/><stop offset="0.471" stop-color="#ffb300"/><stop offset="0.529" stop-color="#ffba00"/><stop offset="0.588" stop-color="#ffc000"/><stop offset="0.647" stop-color="#ffc600"/><stop offset="0.706" stop-color="#ffca00"/><stop offset="0.765" stop-color="#ffcd00"/><stop offset="0.824" stop-color="#ffcf00"/><stop offset="0.882" stop-color="#ffce00"/><stop offset="0.941" stop-color="#ffc900"/><stop offset="1.000" stop-color="#ffb700"/></linearGradient><linearGradient id="g25" gradientUnits="userSpaceOnUse" x1="365" y1="0" x2="434" y2="0"><stop offset="0.000" stop-color="#623d00"/><stop offset="0.058" stop-color="#8b5700"/><stop offset="0.116" stop-color="#ac6c00"/><stop offset="0.174" stop-color="#c47b00"/><stop offset="0.232" stop-color="#d98800"/><stop offset="0.290" stop-color="#eb9400"/><stop offset="0.348" stop-color="#fc9e00"/><stop offset="0.406" stop-color="#ffa700"/><stop offset="0.464" stop-color="#ffaf00"/><stop offset="0.522" stop-color="#ffb700"/><stop offset="0.580" stop-color="#ffbd00"/><stop offset="0.638" stop-color="#ffc300"/><stop offset="0.696" stop-color="#ffc800"/><stop offset="0.754" stop-color="#ffcb00"/><stop offset="0.812" stop-color="#ffcd00"/><stop offset="0.870" stop-color="#ffce00"/><stop offset="0.928" stop-color="#ffca00"/><stop offset="0.986" stop-color="#ffb600"/><stop offset="1.000" stop-color="#ffb500"/></linearGradient><linearGradient id="g26" gradientUnits="userSpaceOnUse" x1="365" y1="0" x2="435" y2="0"><stop offset="0.000" stop-color="#613d00"/><stop offset="0.057" stop-color="#8a5700"/><stop offset="0.114" stop-color="#aa6b00"/><stop offset="0.171" stop-color="#c27a00"/><stop offset="0.229" stop-color="#d78700"/><stop offset="0.286" stop-color="#e99200"/><stop offset="0.343" stop-color="#fa9d00"/><stop offset="0.400" stop-color="#ffa600"/><stop offset="0.457" stop-color="#ffae00"/><stop offset="0.514" stop-color="#ffb600"/><stop offset="0.571" stop-color="#ffbc00"/><stop offset="0.629" stop-color="#ffc200"/><stop offset="0.686" stop-color="#ffc600"/><stop offset="0.743" stop-color="#ffca00"/><stop offset="0.800" stop-color="#ffcc00"/><stop offset="0.857" stop-color="#ffcd00"/><stop offset="0.914" stop-color="#ffca00"/><stop offset="0.971" stop-color="#ffba00"/><stop offset="1.000" stop-color="#ffb400"/></linearGradient><linearGradient id="g27" gradientUnits="userSpaceOnUse" x1="365" y1="0" x2="435" y2="0"><stop offset="0.000" stop-color="#613d00"/><stop offset="0.057" stop-color="#895600"/><stop offset="0.114" stop-color="#a86900"/><stop offset="0.171" stop-color="#c07900"/><stop offset="0.229" stop-color="#d58600"/><stop offset="0.286" stop-color="#e79100"/><stop offset="0.343" stop-color="#f79b00"/><stop offset="0.400" stop-color="#ffa400"/><stop offset="0.457" stop-color="#ffad00"/><stop offset="0.514" stop-color="#ffb400"/><stop offset="0.571" stop-color="#ffbb00"/><stop offset="0.629" stop-color="#ffc000"/><stop offset="0.686" stop-color="#ffc500"/><stop offset="0.743" stop-color="#ffc900"/><stop offset="0.800" stop-color="#ffcb00"/><stop offset="0.857" stop-color="#ffcb00"/><stop offset="0.914" stop-color="#ffc900"/><stop offset="0.971" stop-color="#ffbb00"/><stop offset="1.000" stop-color="#ffb300"/></linearGradient><linearGradient id="g28" gradientUnits="userSpaceOnUse" x1="365" y1="0" x2="435" y2="0"><stop offset="0.000" stop-color="#613d00"/><stop offset="0.057" stop-color="#875500"/><stop offset="0.114" stop-color="#a66800"/><stop offset="0.171" stop-color="#be7700"/><stop offset="0.229" stop-color="#d38400"/><stop offset="0.286" stop-color="#e59000"/><stop offset="0.343" stop-color="#f59a00"/><stop offset="0.400" stop-color="#ffa300"/><stop offset="0.457" stop-color="#ffab00"/><stop offset="0.514" stop-color="#ffb300"/><stop offset="0.571" stop-color="#ffb900"/><stop offset="0.629" stop-color="#ffbf00"/><stop offset="0.686" stop-color="#ffc400"/><stop offset="0.743" stop-color="#ffc700"/><stop offset="0.800" stop-color="#ffca00"/><stop offset="0.857" stop-color="#ffca00"/><stop offset="0.914" stop-color="#ffc700"/><stop offset="0.971" stop-color="#ffbb00"/><stop offset="1.000" stop-color="#ffb100"/></linearGradient><linearGradient id="g29" gradientUnits="userSpaceOnUse" x1="365" y1="0" x2="435" y2="0"><stop offset="0.000" stop-color="#613d00"/><stop offset="0.057" stop-color="#855400"/><stop offset="0.114" stop-color="#a46700"/><stop offset="0.171" stop-color="#bc7600"/><stop offset="0.229" stop-color="#d08300"/><stop offset="0.286" stop-color="#e28e00"/><stop offset="0.343" stop-color="#f39800"/><stop offset="0.400" stop-color="#ffa100"/><stop offset="0.457" stop-color="#ffaa00"/><stop offset="0.514" stop-color="#ffb100"/><stop offset="0.571" stop-color="#ffb800"/><stop offset="0.629" stop-color="#ffbd00"/><stop offset="0.686" stop-color="#ffc200"/><stop offset="0.743" stop-color="#ffc600"/><stop offset="0.800" stop-color="#ffc800"/><stop offset="0.857" stop-color="#ffc900"/><stop offset="0.914" stop-color="#ffc600"/><stop offset="0.971" stop-color="#ffbb00"/><stop offset="1.000" stop-color="#ffb000"/></linearGradient><linearGradient id="g30" gradientUnits="userSpaceOnUse" x1="364" y1="0" x2="435" y2="0"><stop offset="0.000" stop-color="#613d00"/><stop offset="0.056" stop-color="#7a4c00"/><stop offset="0.113" stop-color="#9b6100"/><stop offset="0.169" stop-color="#b47100"/><stop offset="0.225" stop-color="#c97e00"/><stop offset="0.282" stop-color="#dc8a00"/><stop offset="0.338" stop-color="#ec9400"/><stop offset="0.394" stop-color="#fb9e00"/><stop offset="0.451" stop-color="#ffa600"/><stop offset="0.507" stop-color="#ffae00"/><stop offset="0.563" stop-color="#ffb500"/><stop offset="0.620" stop-color="#ffba00"/><stop offset="0.676" stop-color="#ffbf00"/><stop offset="0.732" stop-color="#ffc300"/><stop offset="0.789" stop-color="#ffc600"/><stop offset="0.845" stop-color="#ffc700"/><stop offset="0.901" stop-color="#ffc600"/><stop offset="0.958" stop-color="#ffbf00"/><stop offset="1.000" stop-color="#ffae00"/></linearGradient><linearGradient id="g31" gradientUnits="userSpaceOnUse" x1="364" y1="0" x2="435" y2="0"><stop offset="0.000" stop-color="#613d00"/><stop offset="0.056" stop-color="#774b00"/><stop offset="0.113" stop-color="#986000"/><stop offset="0.169" stop-color="#b16f00"/><stop offset="0.225" stop-color="#c67d00"/><stop offset="0.282" stop-color="#d98800"/><stop offset="0.338" stop-color="#ea9300"/><stop offset="0.394" stop-color="#f99c00"/><stop offset="0.451" stop-color="#ffa400"/><stop offset="0.507" stop-color="#ffac00"/><stop offset="0.563" stop-color="#ffb300"/><stop offset="0.620" stop-color="#ffb900"/><stop offset="0.676" stop-color="#ffbe00"/><stop offset="0.732" stop-color="#ffc200"/><stop offset="0.789" stop-color="#ffc500"/><stop offset="0.845" stop-color="#ffc600"/><stop offset="0.901" stop-color="#ffc400"/><stop offset="0.958" stop-color="#ffbd00"/><stop offset="1.000" stop-color="#ffad00"/></linearGradient><linearGradient id="g32" gradientUnits="userSpaceOnUse" x1="364" y1="0" x2="435" y2="0"><stop offset="0.000" stop-color="#613d00"/><stop offset="0.056" stop-color="#754900"/><stop offset="0.113" stop-color="#965e00"/><stop offset="0.169" stop-color="#af6e00"/><stop offset="0.225" stop-color="#c47b00"/><stop offset="0.282" stop-color="#d68700"/><stop offset="0.338" stop-color="#e79100"/><stop offset="0.394" stop-color="#f69a00"/><stop offset="0.451" stop-color="#ffa300"/><stop offset="0.507" stop-color="#ffaa00"/><stop offset="0.563" stop-color="#ffb100"/><stop offset="0.620" stop-color="#ffb700"/><stop offset="0.676" stop-color="#ffbc00"/><stop offset="0.732" stop-color="#ffc000"/><stop offset="0.789" stop-color="#ffc300"/><stop offset="0.845" stop-color="#ffc400"/><stop offset="0.901" stop-color="#ffc300"/><stop offset="0.958" stop-color="#ffbc00"/><stop offset="1.000" stop-color="#ffab00"/></linearGradient><linearGradient id="g33" gradientUnits="userSpaceOnUse" x1="364" y1="0" x2="436" y2="0"><stop offset="0.000" stop-color="#613d00"/><stop offset="0.056" stop-color="#724800"/><stop offset="0.111" stop-color="#935c00"/><stop offset="0.167" stop-color="#ac6c00"/><stop offset="0.222" stop-color="#c17900"/><stop offset="0.278" stop-color="#d48500"/><stop offset="0.333" stop-color="#e48f00"/><stop offset="0.389" stop-color="#f39900"/><stop offset="0.444" stop-color="#ffa100"/><stop offset="0.500" stop-color="#ffa900"/><stop offset="0.556" stop-color="#ffaf00"/><stop offset="0.611" stop-color="#ffb500"/><stop offset="0.667" stop-color="#ffba00"/><stop offset="0.722" stop-color="#ffbe00"/><stop offset="0.778" stop-color="#ffc100"/><stop offset="0.833" stop-color="#ffc200"/><stop offset="0.889" stop-color="#ffc100"/><stop offset="0.944" stop-color="#ffba00"/><stop offset="1.000" stop-color="#ffa900"/></linearGradient><linearGradient id="g34" gradientUnits="userSpaceOnUse" x1="364" y1="0" x2="436" y2="0"><stop offset="0.000" stop-color="#613d00"/><stop offset="0.056" stop-color="#704600"/><stop offset="0.111" stop-color="#905b00"/><stop offset="0.167" stop-color="#a96a00"/><stop offset="0.222" stop-color="#be7700"/><stop offset="0.278" stop-color="#d18300"/><stop offset="0.333" stop-color="#e18d00"/><stop offset="0.389" stop-color="#f09700"/><stop offset="0.444" stop-color="#fe9f00"/><stop offset="0.500" stop-color="#ffa700"/><stop offset="0.556" stop-color="#ffae00"/><stop offset="0.611" stop-color="#ffb400"/><stop offset="0.667" stop-color="#ffb900"/><stop offset="0.722" stop-color="#ffbd00"/><stop offset="0.778" stop-color="#ffbf00"/><stop offset="0.833" stop-color="#ffc000"/><stop offset="0.889" stop-color="#ffbf00"/><stop offset="0.944" stop-color="#ffb900"/><stop offset="1.000" stop-color="#ffa800"/></linearGradient><linearGradient id="g35" gradientUnits="userSpaceOnUse" x1="364" y1="0" x2="435" y2="0"><stop offset="0.000" stop-color="#613d00"/><stop offset="0.056" stop-color="#6d4400"/><stop offset="0.113" stop-color="#8d5900"/><stop offset="0.169" stop-color="#a66800"/><stop offset="0.225" stop-color="#bb7500"/><stop offset="0.282" stop-color="#ce8100"/><stop offset="0.338" stop-color="#de8c00"/><stop offset="0.394" stop-color="#ed9500"/><stop offset="0.451" stop-color="#fb9d00"/><stop offset="0.507" stop-color="#ffa500"/><stop offset="0.563" stop-color="#ffac00"/><stop offset="0.620" stop-color="#ffb200"/><stop offset="0.676" stop-color="#ffb700"/><stop offset="0.732" stop-color="#ffbb00"/><stop offset="0.789" stop-color="#ffbd00"/><stop offset="0.845" stop-color="#ffbf00"/><stop offset="0.901" stop-color="#ffbd00"/><stop offset="0.958" stop-color="#ffb700"/><stop offset="1.000" stop-color="#ffa600"/></linearGradient><linearGradient id="g36" gradientUnits="userSpaceOnUse" x1="364" y1="0" x2="435" y2="0"><stop offset="0.000" stop-color="#613d00"/><stop offset="0.056" stop-color="#694200"/><stop offset="0.113" stop-color="#8a5700"/><stop offset="0.169" stop-color="#a36600"/><stop offset="0.225" stop-color="#b87400"/><stop offset="0.282" stop-color="#cb7f00"/><stop offset="0.338" stop-color="#db8a00"/><stop offset="0.394" stop-color="#ea9300"/><stop offset="0.451" stop-color="#f89c00"/><stop offset="0.507" stop-color="#ffa300"/><stop offset="0.563" stop-color="#ffaa00"/><stop offset="0.620" stop-color="#ffb000"/><stop offset="0.676" stop-color="#ffb500"/><stop offset="0.732" stop-color="#ffb900"/><stop offset="0.789" stop-color="#ffbc00"/><stop offset="0.845" stop-color="#ffbd00"/><stop offset="0.901" stop-color="#ffbb00"/><stop offset="0.958" stop-color="#ffb500"/><stop offset="1.000" stop-color="#ffa400"/></linearGradient><linearGradient id="g37" gradientUnits="userSpaceOnUse" x1="364" y1="0" x2="435" y2="0"><stop offset="0.000" stop-color="#613d00"/><stop offset="0.056" stop-color="#664000"/><stop offset="0.113" stop-color="#875500"/><stop offset="0.169" stop-color="#a06400"/><stop offset="0.225" stop-color="#b57200"/><stop offset="0.282" stop-color="#c87d00"/><stop offset="0.338" stop-color="#d88800"/><stop offset="0.394" stop-color="#e79100"/><stop offset="0.451" stop-color="#f59a00"/><stop offset="0.507" stop-color="#ffa100"/><stop offset="0.563" stop-color="#ffa800"/><stop offset="0.620" stop-color="#ffae00"/><stop offset="0.676" stop-color="#ffb300"/><stop offset="0.732" stop-color="#ffb700"/><stop offset="0.789" stop-color="#ffba00"/><stop offset="0.845" stop-color="#ffbb00"/><stop offset="0.901" stop-color="#ffb900"/><stop offset="0.958" stop-color="#ffb200"/><stop offset="1.000" stop-color="#ffa200"/></linearGradient><linearGradient id="g38" gradientUnits="userSpaceOnUse" x1="364" y1="0" x2="435" y2="0"><stop offset="0.000" stop-color="#613d00"/><stop offset="0.056" stop-color="#623d00"/><stop offset="0.113" stop-color="#845300"/><stop offset="0.169" stop-color="#9d6200"/><stop offset="0.225" stop-color="#b27000"/><stop offset="0.282" stop-color="#c47b00"/><stop offset="0.338" stop-color="#d58600"/><stop offset="0.394" stop-color="#e48f00"/><stop offset="0.451" stop-color="#f29800"/><stop offset="0.507" stop-color="#fe9f00"/><stop offset="0.563" stop-color="#ffa600"/><stop offset="0.620" stop-color="#ffac00"/><stop offset="0.676" stop-color="#ffb100"/><stop offset="0.732" stop-color="#ffb500"/><stop offset="0.789" stop-color="#ffb800"/><stop offset="0.845" stop-color="#ffb900"/><stop offset="0.901" stop-color="#ffb700"/><stop offset="0.958" stop-color="#ffb000"/><stop offset="1.000" stop-color="#ffa000"/></linearGradient><linearGradient id="g39" gradientUnits="userSpaceOnUse" x1="365" y1="0" x2="435" y2="0"><stop offset="0.000" stop-color="#613d00"/><stop offset="0.057" stop-color="#684100"/><stop offset="0.114" stop-color="#875500"/><stop offset="0.171" stop-color="#9f6400"/><stop offset="0.229" stop-color="#b37000"/><stop offset="0.286" stop-color="#c57c00"/><stop offset="0.343" stop-color="#d68600"/><stop offset="0.400" stop-color="#e48f00"/><stop offset="0.457" stop-color="#f19700"/><stop offset="0.514" stop-color="#fd9f00"/><stop offset="0.571" stop-color="#ffa500"/><stop offset="0.629" stop-color="#ffab00"/><stop offset="0.686" stop-color="#ffb000"/><stop offset="0.743" stop-color="#ffb400"/><stop offset="0.800" stop-color="#ffb600"/><stop offset="0.857" stop-color="#ffb600"/><stop offset="0.914" stop-color="#ffb400"/><stop offset="0.971" stop-color="#ffa800"/><stop offset="1.000" stop-color="#fc9e00"/></linearGradient><linearGradient id="g40" gradientUnits="userSpaceOnUse" x1="365" y1="0" x2="435" y2="0"><stop offset="0.000" stop-color="#613d00"/><stop offset="0.057" stop-color="#643f00"/><stop offset="0.114" stop-color="#835200"/><stop offset="0.171" stop-color="#9b6100"/><stop offset="0.229" stop-color="#b06e00"/><stop offset="0.286" stop-color="#c27a00"/><stop offset="0.343" stop-color="#d28400"/><stop offset="0.400" stop-color="#e18d00"/><stop offset="0.457" stop-color="#ee9500"/><stop offset="0.514" stop-color="#fa9d00"/><stop offset="0.571" stop-color="#ffa300"/><stop offset="0.629" stop-color="#ffa900"/><stop offset="0.686" stop-color="#ffae00"/><stop offset="0.743" stop-color="#ffb100"/><stop offset="0.800" stop-color="#ffb400"/><stop offset="0.857" stop-color="#ffb400"/><stop offset="0.914" stop-color="#ffb100"/><stop offset="0.971" stop-color="#ffa400"/><stop offset="1.000" stop-color="#f99c00"/></linearGradient><linearGradient id="g41" gradientUnits="userSpaceOnUse" x1="365" y1="0" x2="435" y2="0"><stop offset="0.000" stop-color="#613d00"/><stop offset="0.057" stop-color="#613d00"/><stop offset="0.114" stop-color="#7f5000"/><stop offset="0.171" stop-color="#985f00"/><stop offset="0.229" stop-color="#ac6c00"/><stop offset="0.286" stop-color="#be7700"/><stop offset="0.343" stop-color="#cf8200"/><stop offset="0.400" stop-color="#dd8b00"/><stop offset="0.457" stop-color="#eb9300"/><stop offset="0.514" stop-color="#f69b00"/><stop offset="0.571" stop-color="#ffa100"/><stop offset="0.629" stop-color="#ffa700"/><stop offset="0.686" stop-color="#ffac00"/><stop offset="0.743" stop-color="#ffaf00"/><stop offset="0.800" stop-color="#ffb100"/><stop offset="0.857" stop-color="#ffb200"/><stop offset="0.914" stop-color="#ffaf00"/><stop offset="0.971" stop-color="#ffa000"/><stop offset="1.000" stop-color="#f69a00"/></linearGradient><linearGradient id="g42" gradientUnits="userSpaceOnUse" x1="365" y1="0" x2="434" y2="0"><stop offset="0.000" stop-color="#613d00"/><stop offset="0.058" stop-color="#613d00"/><stop offset="0.116" stop-color="#7b4d00"/><stop offset="0.174" stop-color="#945d00"/><stop offset="0.232" stop-color="#a96a00"/><stop offset="0.290" stop-color="#bb7500"/><stop offset="0.348" stop-color="#cb7f00"/><stop offset="0.406" stop-color="#da8900"/><stop offset="0.464" stop-color="#e79100"/><stop offset="0.522" stop-color="#f39800"/><stop offset="0.580" stop-color="#fd9f00"/><stop offset="0.638" stop-color="#ffa500"/><stop offset="0.696" stop-color="#ffa900"/><stop offset="0.754" stop-color="#ffad00"/><stop offset="0.812" stop-color="#ffaf00"/><stop offset="0.870" stop-color="#ffaf00"/><stop offset="0.928" stop-color="#ffac00"/><stop offset="0.986" stop-color="#f19700"/><stop offset="1.000" stop-color="#f29800"/></linearGradient><linearGradient id="g43" gradientUnits="userSpaceOnUse" x1="366" y1="0" x2="434" y2="0"><stop offset="0.000" stop-color="#613d00"/><stop offset="0.059" stop-color="#613d00"/><stop offset="0.118" stop-color="#7e4f00"/><stop offset="0.176" stop-color="#955e00"/><stop offset="0.235" stop-color="#aa6a00"/><stop offset="0.294" stop-color="#bb7600"/><stop offset="0.353" stop-color="#cb8000"/><stop offset="0.412" stop-color="#da8900"/><stop offset="0.471" stop-color="#e69100"/><stop offset="0.529" stop-color="#f29800"/><stop offset="0.588" stop-color="#fc9e00"/><stop offset="0.647" stop-color="#ffa400"/><stop offset="0.706" stop-color="#ffa800"/><stop offset="0.765" stop-color="#ffab00"/><stop offset="0.824" stop-color="#ffad00"/><stop offset="0.882" stop-color="#ffac00"/><stop offset="0.941" stop-color="#ffa700"/><stop offset="1.000" stop-color="#ef9600"/></linearGradient><linearGradient id="g44" gradientUnits="userSpaceOnUse" x1="366" y1="0" x2="434" y2="0"><stop offset="0.000" stop-color="#613d00"/><stop offset="0.059" stop-color="#613d00"/><stop offset="0.118" stop-color="#794c00"/><stop offset="0.176" stop-color="#915b00"/><stop offset="0.235" stop-color="#a66800"/><stop offset="0.294" stop-color="#b87300"/><stop offset="0.353" stop-color="#c87d00"/><stop offset="0.412" stop-color="#d68600"/><stop offset="0.471" stop-color="#e38e00"/><stop offset="0.529" stop-color="#ee9500"/><stop offset="0.588" stop-color="#f89c00"/><stop offset="0.647" stop-color="#ffa100"/><stop offset="0.706" stop-color="#ffa600"/><stop offset="0.765" stop-color="#ffa900"/><stop offset="0.824" stop-color="#ffaa00"/><stop offset="0.882" stop-color="#ffaa00"/><stop offset="0.941" stop-color="#ffa400"/><stop offset="1.000" stop-color="#eb9400"/></linearGradient><linearGradient id="g45" gradientUnits="userSpaceOnUse" x1="366" y1="0" x2="434" y2="0"><stop offset="0.000" stop-color="#613d00"/><stop offset="0.059" stop-color="#613d00"/><stop offset="0.118" stop-color="#754900"/><stop offset="0.176" stop-color="#8d5900"/><stop offset="0.235" stop-color="#a26500"/><stop offset="0.294" stop-color="#b47100"/><stop offset="0.353" stop-color="#c47b00"/><stop offset="0.412" stop-color="#d28400"/><stop offset="0.471" stop-color="#df8c00"/><stop offset="0.529" stop-color="#ea9300"/><stop offset="0.588" stop-color="#f49900"/><stop offset="0.647" stop-color="#fd9f00"/><stop offset="0.706" stop-color="#ffa300"/><stop offset="0.765" stop-color="#ffa600"/><stop offset="0.824" stop-color="#ffa800"/><stop offset="0.882" stop-color="#ffa700"/><stop offset="0.941" stop-color="#ffa100"/><stop offset="1.000" stop-color="#e89200"/></linearGradient><linearGradient id="g46" gradientUnits="userSpaceOnUse" x1="367" y1="0" x2="433" y2="0"><stop offset="0.000" stop-color="#613d00"/><stop offset="0.061" stop-color="#613d00"/><stop offset="0.121" stop-color="#774b00"/><stop offset="0.182" stop-color="#8e5900"/><stop offset="0.242" stop-color="#a26600"/><stop offset="0.303" stop-color="#b47100"/><stop offset="0.364" stop-color="#c37b00"/><stop offset="0.424" stop-color="#d18300"/><stop offset="0.485" stop-color="#de8b00"/><stop offset="0.545" stop-color="#e99200"/><stop offset="0.606" stop-color="#f39800"/><stop offset="0.667" stop-color="#fb9d00"/><stop offset="0.727" stop-color="#ffa100"/><stop offset="0.788" stop-color="#ffa400"/><stop offset="0.848" stop-color="#ffa500"/><stop offset="0.909" stop-color="#ffa300"/><stop offset="0.970" stop-color="#f39800"/><stop offset="1.000" stop-color="#e48f00"/></linearGradient><linearGradient id="g47" gradientUnits="userSpaceOnUse" x1="367" y1="0" x2="433" y2="0"><stop offset="0.000" stop-color="#613d00"/><stop offset="0.061" stop-color="#613d00"/><stop offset="0.121" stop-color="#724800"/><stop offset="0.182" stop-color="#8a5700"/><stop offset="0.242" stop-color="#9e6300"/><stop offset="0.303" stop-color="#b06e00"/><stop offset="0.364" stop-color="#bf7800"/><stop offset="0.424" stop-color="#cd8100"/><stop offset="0.485" stop-color="#da8900"/><stop offset="0.545" stop-color="#e59000"/><stop offset="0.606" stop-color="#ef9600"/><stop offset="0.667" stop-color="#f79b00"/><stop offset="0.727" stop-color="#fd9f00"/><stop offset="0.788" stop-color="#ffa100"/><stop offset="0.848" stop-color="#ffa200"/><stop offset="0.909" stop-color="#ffa000"/><stop offset="0.970" stop-color="#ea9300"/><stop offset="1.000" stop-color="#e08d00"/></linearGradient><linearGradient id="g48" gradientUnits="userSpaceOnUse" x1="367" y1="0" x2="432" y2="0"><stop offset="0.000" stop-color="#613d00"/><stop offset="0.062" stop-color="#613d00"/><stop offset="0.123" stop-color="#6d4500"/><stop offset="0.185" stop-color="#855400"/><stop offset="0.246" stop-color="#9a6000"/><stop offset="0.308" stop-color="#ab6c00"/><stop offset="0.369" stop-color="#bb7500"/><stop offset="0.431" stop-color="#c97e00"/><stop offset="0.492" stop-color="#d68600"/><stop offset="0.554" stop-color="#e18d00"/><stop offset="0.615" stop-color="#eb9300"/><stop offset="0.677" stop-color="#f39800"/><stop offset="0.738" stop-color="#f99c00"/><stop offset="0.800" stop-color="#fd9f00"/><stop offset="0.862" stop-color="#fe9f00"/><stop offset="0.923" stop-color="#f99c00"/><stop offset="0.985" stop-color="#da8900"/><stop offset="1.000" stop-color="#dc8a00"/></linearGradient><linearGradient id="g49" gradientUnits="userSpaceOnUse" x1="368" y1="0" x2="432" y2="0"><stop offset="0.000" stop-color="#613d00"/><stop offset="0.062" stop-color="#613d00"/><stop offset="0.125" stop-color="#6f4500"/><stop offset="0.188" stop-color="#865400"/><stop offset="0.250" stop-color="#9a6100"/><stop offset="0.312" stop-color="#ab6b00"/><stop offset="0.375" stop-color="#bb7500"/><stop offset="0.438" stop-color="#c87e00"/><stop offset="0.500" stop-color="#d58500"/><stop offset="0.562" stop-color="#df8c00"/><stop offset="0.625" stop-color="#e89200"/><stop offset="0.688" stop-color="#f09700"/><stop offset="0.750" stop-color="#f69a00"/><stop offset="0.812" stop-color="#f99c00"/><stop offset="0.875" stop-color="#f89c00"/><stop offset="0.938" stop-color="#f09700"/><stop offset="1.000" stop-color="#d88800"/></linearGradient><linearGradient id="g50" gradientUnits="userSpaceOnUse" x1="368" y1="0" x2="431" y2="0"><stop offset="0.000" stop-color="#613d00"/><stop offset="0.063" stop-color="#613d00"/><stop offset="0.127" stop-color="#694200"/><stop offset="0.190" stop-color="#815100"/><stop offset="0.254" stop-color="#955e00"/><stop offset="0.317" stop-color="#a76900"/><stop offset="0.381" stop-color="#b67200"/><stop offset="0.444" stop-color="#c47b00"/><stop offset="0.508" stop-color="#d08300"/><stop offset="0.571" stop-color="#db8900"/><stop offset="0.635" stop-color="#e48f00"/><stop offset="0.698" stop-color="#ec9400"/><stop offset="0.762" stop-color="#f19700"/><stop offset="0.825" stop-color="#f49900"/><stop offset="0.889" stop-color="#f39800"/><stop offset="0.952" stop-color="#e99200"/><stop offset="1.000" stop-color="#d38500"/></linearGradient><linearGradient id="g51" gradientUnits="userSpaceOnUse" x1="369" y1="0" x2="431" y2="0"><stop offset="0.000" stop-color="#613d00"/><stop offset="0.065" stop-color="#613d00"/><stop offset="0.129" stop-color="#6a4300"/><stop offset="0.194" stop-color="#825100"/><stop offset="0.258" stop-color="#955e00"/><stop offset="0.323" stop-color="#a66800"/><stop offset="0.387" stop-color="#b57200"/><stop offset="0.452" stop-color="#c37a00"/><stop offset="0.516" stop-color="#cf8200"/><stop offset="0.581" stop-color="#d98800"/><stop offset="0.645" stop-color="#e28e00"/><stop offset="0.710" stop-color="#e89200"/><stop offset="0.774" stop-color="#ed9500"/><stop offset="0.839" stop-color="#ef9600"/><stop offset="0.903" stop-color="#ec9400"/><stop offset="0.968" stop-color="#d88700"/><stop offset="1.000" stop-color="#d08200"/></linearGradient><linearGradient id="g52" gradientUnits="userSpaceOnUse" x1="370" y1="0" x2="430" y2="0"><stop offset="0.000" stop-color="#613d00"/><stop offset="0.067" stop-color="#613d00"/><stop offset="0.133" stop-color="#6b4300"/><stop offset="0.200" stop-color="#825100"/><stop offset="0.267" stop-color="#955d00"/><stop offset="0.333" stop-color="#a56800"/><stop offset="0.400" stop-color="#b47100"/><stop offset="0.467" stop-color="#c17900"/><stop offset="0.533" stop-color="#cd8000"/><stop offset="0.600" stop-color="#d78700"/><stop offset="0.667" stop-color="#df8c00"/><stop offset="0.733" stop-color="#e59000"/><stop offset="0.800" stop-color="#e99200"/><stop offset="0.867" stop-color="#e99200"/><stop offset="0.933" stop-color="#e38e00"/><stop offset="1.000" stop-color="#cb7f00"/></linearGradient><linearGradient id="g53" gradientUnits="userSpaceOnUse" x1="370" y1="0" x2="430" y2="0"><stop offset="0.000" stop-color="#613d00"/><stop offset="0.067" stop-color="#613d00"/><stop offset="0.133" stop-color="#654000"/><stop offset="0.200" stop-color="#7c4e00"/><stop offset="0.267" stop-color="#905a00"/><stop offset="0.333" stop-color="#a06500"/><stop offset="0.400" stop-color="#af6e00"/><stop offset="0.467" stop-color="#bc7600"/><stop offset="0.533" stop-color="#c87d00"/><stop offset="0.600" stop-color="#d28400"/><stop offset="0.667" stop-color="#da8900"/><stop offset="0.733" stop-color="#e08c00"/><stop offset="0.800" stop-color="#e38f00"/><stop offset="0.867" stop-color="#e38f00"/><stop offset="0.933" stop-color="#db8a00"/><stop offset="1.000" stop-color="#c77d00"/></linearGradient><linearGradient id="g54" gradientUnits="userSpaceOnUse" x1="371" y1="0" x2="429" y2="0"><stop offset="0.000" stop-color="#613d00"/><stop offset="0.069" stop-color="#613d00"/><stop offset="0.138" stop-color="#664000"/><stop offset="0.207" stop-color="#7c4e00"/><stop offset="0.276" stop-color="#8f5a00"/><stop offset="0.345" stop-color="#9f6400"/><stop offset="0.414" stop-color="#ae6d00"/><stop offset="0.483" stop-color="#bb7500"/><stop offset="0.552" stop-color="#c67c00"/><stop offset="0.621" stop-color="#cf8200"/><stop offset="0.690" stop-color="#d68700"/><stop offset="0.759" stop-color="#dc8a00"/><stop offset="0.828" stop-color="#de8b00"/><stop offset="0.897" stop-color="#dc8a00"/><stop offset="0.966" stop-color="#c97e00"/><stop offset="1.000" stop-color="#c27a00"/></linearGradient><linearGradient id="g55" gradientUnits="userSpaceOnUse" x1="372" y1="0" x2="428" y2="0"><stop offset="0.000" stop-color="#613d00"/><stop offset="0.071" stop-color="#613d00"/><stop offset="0.143" stop-color="#664000"/><stop offset="0.214" stop-color="#7b4d00"/><stop offset="0.286" stop-color="#8e5900"/><stop offset="0.357" stop-color="#9e6300"/><stop offset="0.429" stop-color="#ac6c00"/><stop offset="0.500" stop-color="#b87400"/><stop offset="0.571" stop-color="#c37a00"/><stop offset="0.643" stop-color="#cc8000"/><stop offset="0.714" stop-color="#d38400"/><stop offset="0.786" stop-color="#d78700"/><stop offset="0.857" stop-color="#d88800"/><stop offset="0.929" stop-color="#d28400"/><stop offset="1.000" stop-color="#bd7600"/></linearGradient><linearGradient id="g56" gradientUnits="userSpaceOnUse" x1="373" y1="0" x2="427" y2="0"><stop offset="0.000" stop-color="#613d00"/><stop offset="0.074" stop-color="#613d00"/><stop offset="0.148" stop-color="#653f00"/><stop offset="0.222" stop-color="#7b4d00"/><stop offset="0.296" stop-color="#8d5800"/><stop offset="0.370" stop-color="#9c6200"/><stop offset="0.444" stop-color="#aa6b00"/><stop offset="0.519" stop-color="#b67200"/><stop offset="0.593" stop-color="#c07900"/><stop offset="0.667" stop-color="#c87e00"/><stop offset="0.741" stop-color="#ce8200"/><stop offset="0.815" stop-color="#d28400"/><stop offset="0.889" stop-color="#d18300"/><stop offset="0.963" stop-color="#c37a00"/><stop offset="1.000" stop-color="#b77300"/></linearGradient><linearGradient id="g57" gradientUnits="userSpaceOnUse" x1="373" y1="0" x2="426" y2="0"><stop offset="0.000" stop-color="#613d00"/><stop offset="0.075" stop-color="#613d00"/><stop offset="0.151" stop-color="#613d00"/><stop offset="0.226" stop-color="#754900"/><stop offset="0.302" stop-color="#875500"/><stop offset="0.377" stop-color="#975f00"/><stop offset="0.453" stop-color="#a56700"/><stop offset="0.528" stop-color="#b16f00"/><stop offset="0.604" stop-color="#bb7500"/><stop offset="0.679" stop-color="#c37a00"/><stop offset="0.755" stop-color="#c97e00"/><stop offset="0.830" stop-color="#cb8000"/><stop offset="0.906" stop-color="#c97e00"/><stop offset="0.981" stop-color="#af6e00"/><stop offset="1.000" stop-color="#b26f00"/></linearGradient><linearGradient id="g58" gradientUnits="userSpaceOnUse" x1="374" y1="0" x2="425" y2="0"><stop offset="0.000" stop-color="#613d00"/><stop offset="0.078" stop-color="#613d00"/><stop offset="0.157" stop-color="#613d00"/><stop offset="0.235" stop-color="#734800"/><stop offset="0.314" stop-color="#855400"/><stop offset="0.392" stop-color="#955d00"/><stop offset="0.471" stop-color="#a26600"/><stop offset="0.549" stop-color="#ae6d00"/><stop offset="0.627" stop-color="#b77300"/><stop offset="0.706" stop-color="#bf7800"/><stop offset="0.784" stop-color="#c37b00"/><stop offset="0.863" stop-color="#c47b00"/><stop offset="0.941" stop-color="#be7700"/><stop offset="1.000" stop-color="#ac6c00"/></linearGradient><linearGradient id="g59" gradientUnits="userSpaceOnUse" x1="375" y1="0" x2="424" y2="0"><stop offset="0.000" stop-color="#613d00"/><stop offset="0.082" stop-color="#613d00"/><stop offset="0.163" stop-color="#613d00"/><stop offset="0.245" stop-color="#724700"/><stop offset="0.327" stop-color="#835200"/><stop offset="0.408" stop-color="#925c00"/><stop offset="0.490" stop-color="#9f6400"/><stop offset="0.571" stop-color="#aa6b00"/><stop offset="0.653" stop-color="#b37000"/><stop offset="0.735" stop-color="#ba7500"/><stop offset="0.816" stop-color="#bd7700"/><stop offset="0.898" stop-color="#bc7600"/><stop offset="0.980" stop-color="#a46700"/><stop offset="1.000" stop-color="#a66800"/></linearGradient><linearGradient id="g60" gradientUnits="userSpaceOnUse" x1="377" y1="0" x2="423" y2="0"><stop offset="0.000" stop-color="#613d00"/><stop offset="0.087" stop-color="#613d00"/><stop offset="0.174" stop-color="#613d00"/><stop offset="0.261" stop-color="#744900"/><stop offset="0.348" stop-color="#855300"/><stop offset="0.435" stop-color="#935c00"/><stop offset="0.522" stop-color="#9f6400"/><stop offset="0.609" stop-color="#a96a00"/><stop offset="0.696" stop-color="#b06f00"/><stop offset="0.783" stop-color="#b57200"/><stop offset="0.870" stop-color="#b57200"/><stop offset="0.957" stop-color="#aa6a00"/><stop offset="1.000" stop-color="#a16500"/></linearGradient><linearGradient id="g61" gradientUnits="userSpaceOnUse" x1="378" y1="0" x2="422" y2="0"><stop offset="0.000" stop-color="#613d00"/><stop offset="0.091" stop-color="#613d00"/><stop offset="0.182" stop-color="#613d00"/><stop offset="0.273" stop-color="#724700"/><stop offset="0.364" stop-color="#825100"/><stop offset="0.455" stop-color="#905a00"/><stop offset="0.545" stop-color="#9b6100"/><stop offset="0.636" stop-color="#a46700"/><stop offset="0.727" stop-color="#ab6b00"/><stop offset="0.818" stop-color="#ae6d00"/><stop offset="0.909" stop-color="#aa6b00"/><stop offset="1.000" stop-color="#9b6100"/></linearGradient><linearGradient id="g62" gradientUnits="userSpaceOnUse" x1="379" y1="0" x2="420" y2="0"><stop offset="0.000" stop-color="#613d00"/><stop offset="0.098" stop-color="#613d00"/><stop offset="0.195" stop-color="#613d00"/><stop offset="0.293" stop-color="#6f4500"/><stop offset="0.390" stop-color="#7f4f00"/><stop offset="0.488" stop-color="#8c5800"/><stop offset="0.585" stop-color="#975f00"/><stop offset="0.683" stop-color="#9f6400"/><stop offset="0.780" stop-color="#a46700"/><stop offset="0.878" stop-color="#a56700"/><stop offset="0.976" stop-color="#8f5a00"/><stop offset="1.000" stop-color="#935c00"/></linearGradient><linearGradient id="g63" gradientUnits="userSpaceOnUse" x1="381" y1="0" x2="419" y2="0"><stop offset="0.000" stop-color="#613d00"/><stop offset="0.105" stop-color="#613d00"/><stop offset="0.211" stop-color="#613d00"/><stop offset="0.316" stop-color="#6f4600"/><stop offset="0.421" stop-color="#7e4f00"/><stop offset="0.526" stop-color="#8a5700"/><stop offset="0.632" stop-color="#945d00"/><stop offset="0.737" stop-color="#9a6100"/><stop offset="0.842" stop-color="#9c6200"/><stop offset="0.947" stop-color="#915b00"/><stop offset="1.000" stop-color="#8d5900"/></linearGradient><linearGradient id="g64" gradientUnits="userSpaceOnUse" x1="383" y1="0" x2="417" y2="0"><stop offset="0.000" stop-color="#613d00"/><stop offset="0.118" stop-color="#613d00"/><stop offset="0.235" stop-color="#613d00"/><stop offset="0.353" stop-color="#6f4600"/><stop offset="0.471" stop-color="#7c4e00"/><stop offset="0.588" stop-color="#875500"/><stop offset="0.706" stop-color="#8f5a00"/><stop offset="0.824" stop-color="#925c00"/><stop offset="0.941" stop-color="#8a5700"/><stop offset="1.000" stop-color="#855300"/></linearGradient><linearGradient id="g65" gradientUnits="userSpaceOnUse" x1="385" y1="0" x2="415" y2="0"><stop offset="0.000" stop-color="#613d00"/><stop offset="0.133" stop-color="#613d00"/><stop offset="0.267" stop-color="#613d00"/><stop offset="0.400" stop-color="#6d4400"/><stop offset="0.533" stop-color="#794c00"/><stop offset="0.667" stop-color="#825200"/><stop offset="0.800" stop-color="#875400"/><stop offset="0.933" stop-color="#805000"/><stop offset="1.000" stop-color="#7c4e00"/></linearGradient><linearGradient id="g66" gradientUnits="userSpaceOnUse" x1="387" y1="0" x2="412" y2="0"><stop offset="0.000" stop-color="#613d00"/><stop offset="0.160" stop-color="#613d00"/><stop offset="0.320" stop-color="#613d00"/><stop offset="0.480" stop-color="#694200"/><stop offset="0.640" stop-color="#744900"/><stop offset="0.800" stop-color="#794c00"/><stop offset="0.960" stop-color="#6d4400"/><stop offset="1.000" stop-color="#704600"/></linearGradient><linearGradient id="g67" gradientUnits="userSpaceOnUse" x1="391" y1="0" x2="409" y2="0"><stop offset="0.000" stop-color="#613d00"/><stop offset="0.222" stop-color="#613d00"/><stop offset="0.444" stop-color="#613d00"/><stop offset="0.667" stop-color="#664000"/><stop offset="0.889" stop-color="#653f00"/><stop offset="1.000" stop-color="#653f00"/></linearGradient><linearGradient id="g68" gradientUnits="userSpaceOnUse" x1="398" y1="0" x2="401" y2="0"><stop offset="0.000" stop-color="#613d00"/><stop offset="1.000" stop-color="#613d00"/></linearGradient></defs>
<rect x="393" y="231" width="14" height="1" fill="url(#g0)"/>
<rect x="388" y="232" width="23" height="1" fill="url(#g1)"/>
<rect x="386" y="233" width="28" height="1" fill="url(#g2)"/>
<rect x="383" y="234" width="33" height="1" fill="url(#g3)"/>
<rect x="381" y="235" width="37" height="1" fill="url(#g4)"/>
<rect x="380" y="236" width="40" height="1" fill="url(#g5)"/>
<rect x="378" y="237" width="43" height="1" fill="url(#g6)"/>
<rect x="377" y="238" width="46" height="1" fill="url(#g7)"/>
<rect x="376" y="239" width="48" height="1" fill="url(#g8)"/>
<rect x="375" y="240" width="50" height="1" fill="url(#g9)"/>
<rect x="374" y="241" width="52" height="1" fill="url(#g10)"/>
<rect x="373" y="242" width="54" height="1" fill="url(#g11)"/>
<rect x="372" y="243" width="56" height="1" fill="url(#g12)"/>
<rect x="371" y="244" width="58" height="1" fill="url(#g13)"/>
<rect x="370" y="245" width="59" height="1" fill="url(#g14)"/>
<rect x="370" y="246" width="60" height="1" fill="url(#g15)"/>
<rect x="369" y="247" width="62" height="1" fill="url(#g16)"/>
<rect x="369" y="248" width="62" height="1" fill="url(#g17)"/>
<rect x="368" y="249" width="64" height="1" fill="url(#g18)"/>
<rect x="368" y="250" width="64" height="1" fill="url(#g19)"/>
<rect x="367" y="251" width="66" height="1" fill="url(#g20)"/>
<rect x="367" y="252" width="66" height="1" fill="url(#g21)"/>
<rect x="366" y="253" width="67" height="1" fill="url(#g22)"/>
<rect x="366" y="254" width="68" height="1" fill="url(#g23)"/>
<rect x="366" y="255" width="68" height="1" fill="url(#g24)"/>
<rect x="365" y="256" width="69" height="1" fill="url(#g25)"/>
<rect x="365" y="257" width="70" height="1" fill="url(#g26)"/>
<rect x="365" y="258" width="70" height="1" fill="url(#g27)"/>
<rect x="365" y="259" width="70" height="1" fill="url(#g28)"/>
<rect x="365" y="260" width="70" height="1" fill="url(#g29)"/>
<rect x="364" y="261" width="71" height="1" fill="url(#g30)"/>
<rect x="364" y="262" width="71" height="1" fill="url(#g31)"/>
<rect x="364" y="263" width="71" height="1" fill="url(#g32)"/>
<rect x="364" y="264" width="72" height="1" fill="url(#g33)"/>
<rect x="364" y="265" width="72" height="1" fill="url(#g34)"/>
<rect x="364" y="266" width="71" height="1" fill="url(#g35)"/>
<rect x="364" y="267" width="71" height="1" fill="url(#g36)"/>
<rect x="364" y="268" width="71" height="1" fill="url(#g37)"/>
<rect x="364" y="269" width="71" height="1" fill="url(#g38)"/>
<rect x="365" y="270" width="70" height="1" fill="url(#g39)"/>
<rect x="365" y="271" width="70" height="1" fill="url(#g40)"/>
<rect x="365" y="272" width="70" height="1" fill="url(#g41)"/>
<rect x="365" y="273" width="69" height="1" fill="url(#g42)"/>
<rect x="366" y="274" width="68" height="1" fill="url(#g43)"/>
<rect x="366" y="275" width="68" height="1" fill="url(#g44)"/>
<rect x="366" y="276" width="68" height="1" fill="url(#g45)"/>
<rect x="367" y="277" width="66" height="1" fill="url(#g46)"/>
<rect x="367" y="278" width="66" height="1" fill="url(#g47)"/>
<rect x="367" y="279" width="65" height="1" fill="url(#g48)"/>
<rect x="368" y="280" width="64" height="1" fill="url(#g49)"/>
<rect x="368" y="281" width="63" height="1" fill="url(#g50)"/>
<rect x="369" y="282" width="62" height="1" fill="url(#g51)"/>
<rect x="370" y="283" width="60" height="1" fill="url(#g52)"/>
<rect x="370" y="284" width="60" height="1" fill="url(#g53)"/>
<rect x="371" y="285" width="58" height="1" fill="url(#g54)"/>
<rect x="372" y="286" width="56" height="1" fill="url(#g55)"/>
<rect x="373" y="287" width="54" height="1" fill="url(#g56)"/>
<rect x="373" y="288" width="53" height="1" fill="url(#g57)"/>
<rect x="374" y="289" width="51" height="1" fill="url(#g58)"/>
<rect x="375" y="290" width="49" height="1" fill="url(#g59)"/>
<rect x="377" y="291" width="46" height="1" fill="url(#g60)"/>
<rect x="378" y="292" width="44" height="1" fill="url(#g61)"/>
<rect x="379" y="293" width="41" height="1" fill="url(#g62)"/>
<rect x="381" y="294" width="38" height="1" fill="url(#g63)"/>
<rect x="383" y="295" width="34" height="1" fill="url(#g64)"/>
<rect x="385" y="296" width="30" height="1" fill="url(#g65)"/>
<rect x="387" y="297" width="25" height="1" fill="url(#g66)"/>
<rect x="391" y="298" width="18" height="1" fill="url(#g67)"/>
<rect x="398" y="299" width="3" height="1" fill="url(#g68)"/>
</g>
<polygon points="399.8,232.5 399.8,232.5 399.8,232.5 399.8,232.5 399.7,232.5 399.7,232.5 399.7,232.5 399.6,232.5 399.6,232.5 399.5,232.5 399.5,232.5 399.4,232.5 399.3,232.5 399.2,232.5 399.1,232.5 398.9,232.5 398.8,232.5 398.6,232.5 398.3,232.5 398.0,232.5 397.7,232.6 397.3,232.6 396.8,232.6 396.2,232.7 395.5,232.7 394.7,232.8 393.7,233.0 392.6,233.1 391.2,233.4 389.7,233.7 389.4,233.8 389.2,233.9 388.9,234.0 388.7,234.0 388.4,234.1 388.1,234.2 387.8,234.3 387.5,234.4 387.2,234.5 386.9,234.6 386.6,234.7 386.3,234.8 386.0,234.9 385.7,235.0 385.3,235.1 385.0,235.3 384.7,235.4 384.3,235.6 383.9,235.7 383.6,235.9 383.2,236.0 382.8,236.2 382.4,236.4 382.1,236.6 381.7,236.8 381.3,237.0 380.9,237.2 380.4,237.4 380.0,237.7 379.6,237.9 379.2,238.2 378.7,238.4 378.3,238.7 377.9,239.0 377.4,239.3 377.0,239.6 376.5,240.0 376.0,240.3 375.6,240.7 375.1,241.1 374.7,241.4 374.2,241.8 373.7,242.3 373.3,242.7 372.8,243.2 372.3,243.6 371.9,244.1 371.4,244.6 371.0,245.1 370.5,245.7 370.1,246.2 369.6,246.8 369.2,247.4 368.8,248.0 368.3,248.6 367.9,249.2 367.5,249.9 367.2,250.6 366.8,251.3 366.4,252.0 366.1,252.7 365.7,253.5 365.4,254.2 365.1,255.0 364.9,255.8 364.6,256.6 364.4,257.4 364.1,258.2 363.9,259.1 363.8,259.9 363.6,260.8 363.5,261.6 363.4,262.5 363.3,263.4 363.2,264.3 363.2,265.2 363.2,266.1 363.2,267.0 363.2,267.9 363.3,268.8 363.3,269.7 363.5,270.6 363.6,271.5 363.7,272.4 363.9,273.3 364.1,274.2 364.3,275.0 364.6,275.9 364.9,276.8 365.1,277.6 365.4,278.4 365.8,279.3 366.1,280.1 366.5,280.9 366.9,281.6 367.2,282.4 367.7,283.2 368.1,283.9 368.5,284.6 369.0,285.3 369.4,286.0 369.9,286.7 370.4,287.3 370.9,287.9 371.4,288.5 371.9,289.1 372.4,289.7 372.9,290.2 373.4,290.8 373.9,291.3 374.5,291.8 375.0,292.2 375.6,292.7 376.1,293.1 376.7,293.5 377.2,293.9 377.8,294.2 378.3,294.6 378.9,294.9 379.5,295.2 380.0,295.4 380.6,295.7 381.2,295.9 381.8,296.1 382.3,296.3 382.9,296.4 383.5,296.5 384.1,296.6 384.7,296.6 385.3,296.6 385.9,296.6 386.5,296.6 387.1,296.5 387.7,296.3 388.2,296.2 388.8,296.0 389.3,295.7 389.9,295.5 390.4,295.2 390.9,294.8 391.4,294.5 391.9,294.1 392.3,293.7 392.8,293.2 393.2,292.7 393.6,292.3 394.0,291.7 394.4,291.2 394.7,290.7 395.1,290.1 395.4,289.5 395.7,288.9 396.0,288.2 396.3,287.6 396.6,286.9 396.9,286.2 397.1,285.5 397.4,284.8 397.7,284.1 397.9,283.4 398.1,282.6 398.3,281.8 398.5,281.1 398.7,280.3 398.9,279.5 399.1,278.7 399.3,277.9 399.5,277.1 399.6,276.3 399.8,275.4 399.9,274.6 400.1,273.8 400.2,273.0 400.3,272.2 400.5,271.4 400.6,270.5 400.7,269.7 400.8,268.9 400.9,268.1 401.0,267.3 401.1,266.6 401.2,265.8 401.3,265.0 401.3,264.3 401.4,263.5 401.5,262.8 401.6,262.1 401.6,261.4 401.7,260.7 401.7,260.0 401.8,259.3 401.8,258.6 401.9,258.0 401.9,257.4 402.0,256.7 402.0,256.1 402.0,255.6 402.1,255.0 402.1,254.4 402.1,253.9 402.2,253.3 402.2,252.8 402.2,252.3 402.2,251.8 402.3,251.3 402.3,250.8 402.3,250.4 402.3,249.9 402.3,249.5 402.4,249.1 402.4,248.7 402.4,248.3 402.4,247.9 402.4,247.5 402.4,247.2 402.4,246.8 402.4,246.5 402.5,246.1 402.5,245.8 402.5,245.5 402.5,245.2 402.5,244.9 402.5,244.6 402.5,244.3 402.5,244.1 402.5,243.8 402.5,243.6 402.5,243.3 402.5,243.1 402.5,242.8 402.5,242.6 402.5,242.4 402.5,242.2 402.5,242.0 402.5,241.8 402.6,241.6 402.6,241.4 402.6,241.2 402.6,241.1 402.6,240.0 402.6,239.2 402.6,238.5 402.6,237.9 402.6,237.5 402.6,237.1 402.6,236.8 402.6,236.5 402.6,236.3 402.6,236.1 402.6,236.0 402.6,235.9 402.6,235.8 402.6,235.7 402.6,235.6 402.6,235.6 402.6,235.5 402.6,235.5 402.6,235.5 402.6,235.4 402.6,235.4 402.6,235.4 402.6,235.4 402.6,235.4 402.6,235.3 402.6,235.3 402.6,235.3 402.6,235.3 402.6,235.3 397.1,235.3 397.1,235.3 397.1,235.3 397.1,235.3 397.1,235.3 397.1,235.3 397.1,235.3 397.1,235.3 397.1,235.4 397.1,235.4 397.1,235.4 397.1,235.5 397.1,235.5 397.1,235.5 397.1,235.6 397.1,235.7 397.1,235.7 397.1,235.8 397.1,236.0 397.1,236.1 397.1,236.3 397.1,236.5 397.1,236.7 397.1,237.0 397.1,237.4 397.1,237.9 397.1,238.4 397.1,239.1 397.1,239.9 397.1,241.0 397.1,241.2 397.1,241.3 397.1,241.5 397.1,241.7 397.0,241.9 397.0,242.1 397.0,242.3 397.0,242.5 397.0,242.7 397.0,243.0 397.0,243.2 397.0,243.4 397.0,243.7 397.0,243.9 397.0,244.2 397.0,244.5 397.0,244.8 397.0,245.0 397.0,245.3 397.0,245.7 397.0,246.0 396.9,246.3 396.9,246.6 396.9,247.0 396.9,247.3 396.9,247.7 396.9,248.1 396.9,248.5 396.9,248.9 396.8,249.3 396.8,249.7 396.8,250.2 396.8,250.6 396.8,251.1 396.7,251.5 396.7,252.0 396.7,252.5 396.7,253.0 396.6,253.6 396.6,254.1 396.6,254.7 396.5,255.2 396.5,255.8 396.5,256.4 396.4,257.0 396.4,257.6 396.3,258.2 396.3,258.9 396.2,259.5 396.2,260.2 396.1,260.9 396.1,261.6 396.0,262.3 395.9,263.0 395.9,263.7 395.8,264.4 395.7,265.2 395.6,265.9 395.5,266.7 395.5,267.5 395.4,268.2 395.3,269.0 395.1,269.8 395.0,270.5 394.9,271.3 394.8,272.1 394.7,272.9 394.5,273.7 394.4,274.4 394.2,275.2 394.1,276.0 393.9,276.7 393.8,277.5 393.6,278.2 393.4,278.9 393.2,279.7 393.0,280.4 392.8,281.1 392.6,281.7 392.4,282.4 392.2,283.0 392.0,283.6 391.8,284.2 391.5,284.8 391.3,285.4 391.1,285.9 390.8,286.4 390.6,286.9 390.3,287.3 390.1,287.8 389.9,288.2 389.6,288.6 389.4,288.9 389.1,289.3 388.9,289.6 388.7,289.9 388.4,290.2 388.2,290.4 388.0,290.7 387.8,290.9 387.6,291.1 387.3,291.4 387.1,291.6 386.8,291.8 386.6,292.0 386.3,292.2 386.0,292.3 385.6,292.5 385.3,292.6 384.9,292.7 384.5,292.7 384.1,292.8 383.7,292.8 383.2,292.8 382.8,292.7 382.3,292.6 381.9,292.5 381.4,292.4 380.9,292.2 380.4,292.0 379.9,291.8 379.5,291.5 379.0,291.3 378.5,291.0 378.0,290.6 377.5,290.3 377.0,289.9 376.5,289.5 376.0,289.1 375.5,288.7 375.0,288.2 374.5,287.7 374.0,287.2 373.6,286.7 373.1,286.1 372.6,285.6 372.2,285.0 371.8,284.4 371.3,283.7 370.9,283.1 370.5,282.4 370.1,281.8 369.7,281.1 369.4,280.4 369.0,279.7 368.7,278.9 368.4,278.2 368.1,277.4 367.8,276.6 367.6,275.9 367.3,275.1 367.1,274.3 366.9,273.5 366.8,272.7 366.6,271.9 366.5,271.0 366.4,270.2 366.3,269.4 366.2,268.6 366.2,267.7 366.2,266.9 366.2,266.1 366.2,265.3 366.3,264.5 366.3,263.7 366.4,262.9 366.6,262.1 366.7,261.3 366.9,260.5 367.1,259.8 367.3,259.0 367.5,258.3 367.7,257.6 368.0,256.8 368.2,256.1 368.5,255.5 368.8,254.8 369.2,254.1 369.5,253.5 369.8,252.9 370.2,252.3 370.5,251.7 370.9,251.1 371.3,250.5 371.7,250.0 372.1,249.4 372.5,248.9 372.9,248.4 373.3,248.0 373.7,247.5 374.1,247.0 374.5,246.6 375.0,246.2 375.4,245.8 375.8,245.4 376.2,245.0 376.7,244.6 377.1,244.3 377.5,244.0 377.9,243.6 378.4,243.3 378.8,243.0 379.2,242.7 379.6,242.5 380.0,242.2 380.4,241.9 380.8,241.7 381.2,241.5 381.6,241.2 382.0,241.0 382.3,240.8 382.7,240.6 383.1,240.4 383.4,240.3 383.8,240.1 384.2,239.9 384.5,239.8 384.8,239.6 385.2,239.5 385.5,239.3 385.8,239.2 386.1,239.1 386.5,239.0 386.8,238.9 387.1,238.7 387.4,238.6 387.6,238.5 387.9,238.4 388.2,238.4 388.5,238.3 388.7,238.2 389.0,238.1 389.3,238.0 389.5,238.0 389.8,237.9 390.0,237.8 390.2,237.8 390.5,237.7 390.7,237.7 392.1,237.3 393.3,237.1 394.3,237.0 395.2,236.9 395.9,236.8 396.5,236.7 397.1,236.7 397.5,236.6 397.9,236.6 398.2,236.6 398.5,236.6 398.7,236.6 398.9,236.6 399.0,236.6 399.2,236.6 399.3,236.6 399.4,236.6 399.4,236.6 399.5,236.6 399.6,236.6 399.6,236.6 399.7,236.6 399.7,236.6 399.7,236.6 399.7,236.6 399.8,236.6 399.8,236.6 399.8,236.6 399.8,236.6" fill="#ff0000"/>
<polygon points="402.6,235.2 402.6,235.2 402.6,235.2 402.6,235.2 402.6,235.2 402.6,235.2 402.6,235.2 402.6,235.2 402.6,235.2 402.6,235.1 402.6,235.1 402.6,235.1 402.6,235.0 402.6,235.0 402.6,234.9 402.6,234.9 402.6,234.8 402.6,234.7 402.6,234.6 402.6,234.5 402.6,234.3 402.6,234.2 402.6,234.0 402.6,233.8 402.6,233.5 402.6,233.3 402.6,233.0 402.6,232.7 402.7,232.3 402.7,232.0 402.7,232.0 402.7,231.9 402.7,231.9 402.7,231.8 402.7,231.8 402.7,231.8 402.7,231.7 402.7,231.7 402.7,231.7 402.7,231.7 402.7,231.7 402.7,231.7 402.6,231.7 402.6,231.7 402.6,231.7 402.6,231.7 402.5,231.8 402.4,231.9 402.2,232.0 402.0,232.1 401.5,232.1 400.8,231.9 400.2,231.3 400.1,231.1 400.4,228.3 399.2,228.4 398.3,228.9 397.8,229.4 397.6,229.8 397.5,230.1 397.4,230.3 397.3,230.4 397.3,230.6 397.3,230.7 397.3,230.8 397.3,230.9 397.2,230.9 397.2,231.0 397.2,231.1 397.2,231.2 397.2,231.2 397.2,231.3 397.2,231.4 397.2,231.4 397.2,231.5 397.2,231.5 397.2,231.6 397.2,231.7 397.2,231.8 397.2,232.1 397.2,232.5 397.1,232.9 397.1,233.2 397.1,233.5 397.1,233.7 397.1,233.9 397.1,234.1 397.1,234.3 397.1,234.4 397.1,234.6 397.1,234.7 397.1,234.8 397.1,234.8 397.1,234.9 397.1,234.9 397.1,235.0 397.1,235.0 397.1,235.1 397.1,235.1 397.1,235.1 397.1,235.1 397.1,235.1 397.1,235.2 397.1,235.2 397.1,235.2 397.1,235.2 397.1,235.2 397.1,235.2" fill="#ff0000"/>
<polygon points="436.2,258.6 436.0,257.9 435.9,257.2 435.7,256.5 435.5,255.8 435.3,255.1 435.0,254.4 434.8,253.7 434.5,253.0 434.2,252.4 433.9,251.7 433.5,251.1 433.2,250.4 432.8,249.8 432.5,249.2 432.1,248.6 431.7,248.0 431.3,247.5 430.9,246.9 430.4,246.4 430.0,245.8 429.6,245.3 429.1,244.8 428.7,244.4 428.2,243.9 427.8,243.4 427.3,243.0 426.8,242.6 426.4,242.2 425.9,241.8 425.5,241.4 425.0,241.0 424.5,240.7 424.1,240.3 423.6,240.0 423.2,239.7 422.7,239.3 422.3,239.1 421.8,238.8 421.4,238.5 420.9,238.2 420.5,238.0 420.1,237.7 419.7,237.5 419.2,237.3 418.8,237.1 418.4,236.9 418.0,236.7 417.6,236.5 417.2,236.3 416.9,236.1 416.5,236.0 416.1,235.8 415.8,235.6 415.4,235.5 415.0,235.4 414.7,235.2 414.4,235.1 414.0,235.0 413.7,234.9 413.4,234.8 413.1,234.7 412.8,234.5 412.5,234.5 412.2,234.4 411.9,234.3 411.6,234.2 411.3,234.1 411.1,234.0 410.8,234.0 410.5,233.9 410.3,233.8 410.0,233.8 408.5,233.4 407.1,233.2 406.0,233.0 405.1,232.8 404.2,232.7 403.6,232.7 403.0,232.6 402.5,232.6 402.1,232.6 401.7,232.6 401.4,232.5 401.2,232.5 401.0,232.5 400.8,232.5 400.7,232.5 400.5,232.5 400.4,232.5 400.3,232.5 400.3,232.5 400.2,232.5 400.1,232.5 400.1,232.5 400.1,232.5 400.0,232.5 400.0,232.5 400.0,232.5 400.0,232.5 400.0,232.5 399.9,232.5 399.9,236.6 399.9,236.6 400.0,236.6 400.0,236.6 400.0,236.6 400.0,236.6 400.0,236.6 400.1,236.6 400.1,236.6 400.2,236.6 400.2,236.6 400.3,236.6 400.4,236.6 400.5,236.6 400.6,236.6 400.7,236.6 400.9,236.6 401.0,236.6 401.3,236.6 401.5,236.6 401.8,236.6 402.2,236.7 402.7,236.7 403.2,236.7 403.8,236.8 404.5,236.9 405.4,237.0 406.4,237.1 407.6,237.4 409.1,237.7 409.3,237.7 409.5,237.8 409.7,237.8 410.0,237.9 410.2,238.0 410.5,238.0 410.7,238.1 411.0,238.2 411.3,238.3 411.5,238.4 411.8,238.4 412.1,238.5 412.4,238.6 412.7,238.7 413.0,238.8 413.3,238.9 413.6,239.1 413.9,239.2 414.2,239.3 414.6,239.4 414.9,239.6 415.3,239.7 415.6,239.9 416.0,240.0 416.3,240.2 416.7,240.4 417.0,240.5 417.4,240.7 417.8,240.9 418.2,241.1 418.6,241.3 419.0,241.5 419.4,241.8 419.8,242.0 420.2,242.2 420.6,242.5 421.0,242.8 421.4,243.0 421.8,243.3 422.3,243.6 422.7,243.9 423.1,244.2 423.5,244.6 424.0,244.9 424.4,245.3 424.8,245.6 425.3,246.0 425.7,246.4 426.1,246.8 426.5,247.2 426.9,247.6 427.3,248.1 427.8,248.5 428.2,249.0 428.6,249.5 428.9,249.9 429.3,250.4 429.7,251.0 430.1,251.5 430.4,252.0 430.7,252.5 431.1,253.1 431.4,253.7 431.7,254.2 432.0,254.8 432.3,255.4 432.5,256.0 432.7,256.6 433.0,257.2 433.2,257.8 433.3,258.5 433.5,259.1" fill="#ff0000"/>
<circle cx="399.87" cy="236.26" r="2.6" fill="#ff0000"/>

</g>
</svg>
<div style="position:absolute;left:469.7px;top:239.58px;font-size:11.4px;font-weight:bold;line-height:normal;color:#000;will-change:transform;-webkit-text-stroke:0.15px #000">Im</div>
<div style="position:absolute;left:474.3px;top:320.68px;font-size:11.4px;font-weight:bold;line-height:normal;color:#000;will-change:transform;-webkit-text-stroke:0.15px #000">Re</div>
</body></html>
